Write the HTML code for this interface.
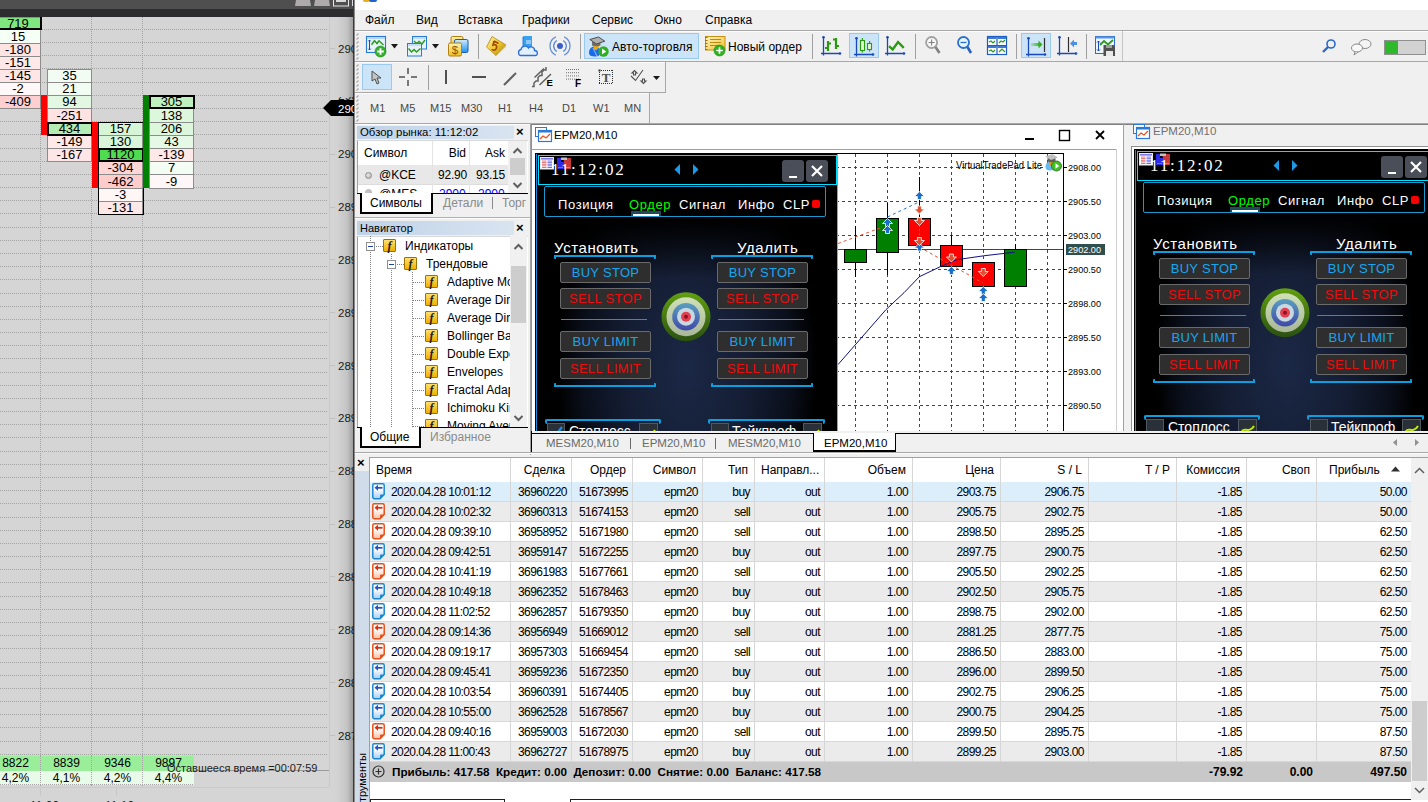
<!DOCTYPE html><html><head><meta charset="utf-8"><style>
html,body{margin:0;padding:0;}
body{width:1428px;height:802px;overflow:hidden;position:relative;background:#d5d5d5;font-family:"Liberation Sans",sans-serif;font-size:11px;color:#000;}
div{box-sizing:border-box;}
.t{position:absolute;white-space:nowrap;}
</style></head><body>
<div style="position:absolute;left:0px;top:0px;width:354px;height:10px;background:#4f4f4f"></div>
<div style="position:absolute;left:0px;top:9px;width:354px;height:8px;background:#2d2d2f"></div>
<svg style="position:absolute;left:290px;top:0" width="64" height="8"><polygon points="6,0 20,0 21,6 5,6" fill="#aeaaab"/><polygon points="25,0 39,0 40,6 24,6" fill="#aeaaab"/><rect x="43.5" y="-1" width="15" height="7" fill="none" stroke="#e8e8e8" stroke-width="1"/><rect x="46" y="-1" width="10" height="3" fill="#d8d8d8"/><line x1="62.5" y1="0" x2="62.5" y2="6" stroke="#ddd"/></svg>
<div style="position:absolute;left:0px;top:29px;width:327px;height:1px;background:repeating-linear-gradient(90deg,#a4a4a4 0 1px,transparent 1px 2px)"></div>
<div style="position:absolute;left:0px;top:42px;width:327px;height:1px;background:repeating-linear-gradient(90deg,#a4a4a4 0 1px,transparent 1px 2px)"></div>
<div style="position:absolute;left:0px;top:55px;width:327px;height:1px;background:repeating-linear-gradient(90deg,#a4a4a4 0 1px,transparent 1px 2px)"></div>
<div style="position:absolute;left:0px;top:68px;width:327px;height:1px;background:repeating-linear-gradient(90deg,#a4a4a4 0 1px,transparent 1px 2px)"></div>
<div style="position:absolute;left:0px;top:82px;width:327px;height:1px;background:repeating-linear-gradient(90deg,#a4a4a4 0 1px,transparent 1px 2px)"></div>
<div style="position:absolute;left:0px;top:95px;width:327px;height:1px;background:repeating-linear-gradient(90deg,#a4a4a4 0 1px,transparent 1px 2px)"></div>
<div style="position:absolute;left:0px;top:108px;width:327px;height:1px;background:repeating-linear-gradient(90deg,#a4a4a4 0 1px,transparent 1px 2px)"></div>
<div style="position:absolute;left:0px;top:121px;width:327px;height:1px;background:repeating-linear-gradient(90deg,#a4a4a4 0 1px,transparent 1px 2px)"></div>
<div style="position:absolute;left:0px;top:134px;width:327px;height:1px;background:repeating-linear-gradient(90deg,#a4a4a4 0 1px,transparent 1px 2px)"></div>
<div style="position:absolute;left:0px;top:148px;width:327px;height:1px;background:repeating-linear-gradient(90deg,#a4a4a4 0 1px,transparent 1px 2px)"></div>
<div style="position:absolute;left:0px;top:161px;width:327px;height:1px;background:repeating-linear-gradient(90deg,#a4a4a4 0 1px,transparent 1px 2px)"></div>
<div style="position:absolute;left:0px;top:174px;width:327px;height:1px;background:repeating-linear-gradient(90deg,#a4a4a4 0 1px,transparent 1px 2px)"></div>
<div style="position:absolute;left:0px;top:187px;width:327px;height:1px;background:repeating-linear-gradient(90deg,#a4a4a4 0 1px,transparent 1px 2px)"></div>
<div style="position:absolute;left:0px;top:200px;width:327px;height:1px;background:repeating-linear-gradient(90deg,#a4a4a4 0 1px,transparent 1px 2px)"></div>
<div style="position:absolute;left:0px;top:213px;width:327px;height:1px;background:repeating-linear-gradient(90deg,#a4a4a4 0 1px,transparent 1px 2px)"></div>
<div style="position:absolute;left:0px;top:227px;width:327px;height:1px;background:repeating-linear-gradient(90deg,#a4a4a4 0 1px,transparent 1px 2px)"></div>
<div style="position:absolute;left:0px;top:240px;width:327px;height:1px;background:repeating-linear-gradient(90deg,#a4a4a4 0 1px,transparent 1px 2px)"></div>
<div style="position:absolute;left:0px;top:253px;width:327px;height:1px;background:repeating-linear-gradient(90deg,#a4a4a4 0 1px,transparent 1px 2px)"></div>
<div style="position:absolute;left:0px;top:266px;width:327px;height:1px;background:repeating-linear-gradient(90deg,#a4a4a4 0 1px,transparent 1px 2px)"></div>
<div style="position:absolute;left:0px;top:279px;width:327px;height:1px;background:repeating-linear-gradient(90deg,#a4a4a4 0 1px,transparent 1px 2px)"></div>
<div style="position:absolute;left:0px;top:293px;width:327px;height:1px;background:repeating-linear-gradient(90deg,#a4a4a4 0 1px,transparent 1px 2px)"></div>
<div style="position:absolute;left:0px;top:306px;width:327px;height:1px;background:repeating-linear-gradient(90deg,#a4a4a4 0 1px,transparent 1px 2px)"></div>
<div style="position:absolute;left:0px;top:319px;width:327px;height:1px;background:repeating-linear-gradient(90deg,#a4a4a4 0 1px,transparent 1px 2px)"></div>
<div style="position:absolute;left:0px;top:332px;width:327px;height:1px;background:repeating-linear-gradient(90deg,#a4a4a4 0 1px,transparent 1px 2px)"></div>
<div style="position:absolute;left:0px;top:345px;width:327px;height:1px;background:repeating-linear-gradient(90deg,#a4a4a4 0 1px,transparent 1px 2px)"></div>
<div style="position:absolute;left:0px;top:358px;width:327px;height:1px;background:repeating-linear-gradient(90deg,#a4a4a4 0 1px,transparent 1px 2px)"></div>
<div style="position:absolute;left:0px;top:372px;width:327px;height:1px;background:repeating-linear-gradient(90deg,#a4a4a4 0 1px,transparent 1px 2px)"></div>
<div style="position:absolute;left:0px;top:385px;width:327px;height:1px;background:repeating-linear-gradient(90deg,#a4a4a4 0 1px,transparent 1px 2px)"></div>
<div style="position:absolute;left:0px;top:398px;width:327px;height:1px;background:repeating-linear-gradient(90deg,#a4a4a4 0 1px,transparent 1px 2px)"></div>
<div style="position:absolute;left:0px;top:411px;width:327px;height:1px;background:repeating-linear-gradient(90deg,#a4a4a4 0 1px,transparent 1px 2px)"></div>
<div style="position:absolute;left:0px;top:424px;width:327px;height:1px;background:repeating-linear-gradient(90deg,#a4a4a4 0 1px,transparent 1px 2px)"></div>
<div style="position:absolute;left:0px;top:437px;width:327px;height:1px;background:repeating-linear-gradient(90deg,#a4a4a4 0 1px,transparent 1px 2px)"></div>
<div style="position:absolute;left:0px;top:451px;width:327px;height:1px;background:repeating-linear-gradient(90deg,#a4a4a4 0 1px,transparent 1px 2px)"></div>
<div style="position:absolute;left:0px;top:464px;width:327px;height:1px;background:repeating-linear-gradient(90deg,#a4a4a4 0 1px,transparent 1px 2px)"></div>
<div style="position:absolute;left:0px;top:477px;width:327px;height:1px;background:repeating-linear-gradient(90deg,#a4a4a4 0 1px,transparent 1px 2px)"></div>
<div style="position:absolute;left:0px;top:490px;width:327px;height:1px;background:repeating-linear-gradient(90deg,#a4a4a4 0 1px,transparent 1px 2px)"></div>
<div style="position:absolute;left:0px;top:503px;width:327px;height:1px;background:repeating-linear-gradient(90deg,#a4a4a4 0 1px,transparent 1px 2px)"></div>
<div style="position:absolute;left:0px;top:517px;width:327px;height:1px;background:repeating-linear-gradient(90deg,#a4a4a4 0 1px,transparent 1px 2px)"></div>
<div style="position:absolute;left:0px;top:530px;width:327px;height:1px;background:repeating-linear-gradient(90deg,#a4a4a4 0 1px,transparent 1px 2px)"></div>
<div style="position:absolute;left:0px;top:543px;width:327px;height:1px;background:repeating-linear-gradient(90deg,#a4a4a4 0 1px,transparent 1px 2px)"></div>
<div style="position:absolute;left:0px;top:556px;width:327px;height:1px;background:repeating-linear-gradient(90deg,#a4a4a4 0 1px,transparent 1px 2px)"></div>
<div style="position:absolute;left:0px;top:569px;width:327px;height:1px;background:repeating-linear-gradient(90deg,#a4a4a4 0 1px,transparent 1px 2px)"></div>
<div style="position:absolute;left:0px;top:582px;width:327px;height:1px;background:repeating-linear-gradient(90deg,#a4a4a4 0 1px,transparent 1px 2px)"></div>
<div style="position:absolute;left:0px;top:596px;width:327px;height:1px;background:repeating-linear-gradient(90deg,#a4a4a4 0 1px,transparent 1px 2px)"></div>
<div style="position:absolute;left:0px;top:609px;width:327px;height:1px;background:repeating-linear-gradient(90deg,#a4a4a4 0 1px,transparent 1px 2px)"></div>
<div style="position:absolute;left:0px;top:622px;width:327px;height:1px;background:repeating-linear-gradient(90deg,#a4a4a4 0 1px,transparent 1px 2px)"></div>
<div style="position:absolute;left:0px;top:635px;width:327px;height:1px;background:repeating-linear-gradient(90deg,#a4a4a4 0 1px,transparent 1px 2px)"></div>
<div style="position:absolute;left:0px;top:648px;width:327px;height:1px;background:repeating-linear-gradient(90deg,#a4a4a4 0 1px,transparent 1px 2px)"></div>
<div style="position:absolute;left:0px;top:662px;width:327px;height:1px;background:repeating-linear-gradient(90deg,#a4a4a4 0 1px,transparent 1px 2px)"></div>
<div style="position:absolute;left:0px;top:675px;width:327px;height:1px;background:repeating-linear-gradient(90deg,#a4a4a4 0 1px,transparent 1px 2px)"></div>
<div style="position:absolute;left:0px;top:688px;width:327px;height:1px;background:repeating-linear-gradient(90deg,#a4a4a4 0 1px,transparent 1px 2px)"></div>
<div style="position:absolute;left:0px;top:701px;width:327px;height:1px;background:repeating-linear-gradient(90deg,#a4a4a4 0 1px,transparent 1px 2px)"></div>
<div style="position:absolute;left:0px;top:714px;width:327px;height:1px;background:repeating-linear-gradient(90deg,#a4a4a4 0 1px,transparent 1px 2px)"></div>
<div style="position:absolute;left:0px;top:727px;width:327px;height:1px;background:repeating-linear-gradient(90deg,#a4a4a4 0 1px,transparent 1px 2px)"></div>
<div style="position:absolute;left:0px;top:741px;width:327px;height:1px;background:repeating-linear-gradient(90deg,#a4a4a4 0 1px,transparent 1px 2px)"></div>
<div style="position:absolute;left:0px;top:754px;width:327px;height:1px;background:repeating-linear-gradient(90deg,#a4a4a4 0 1px,transparent 1px 2px)"></div>
<div style="position:absolute;left:40px;top:17px;width:1px;height:770px;background:repeating-linear-gradient(180deg,#a4a4a4 0 1px,transparent 1px 2px)"></div>
<div style="position:absolute;left:91px;top:17px;width:1px;height:770px;background:repeating-linear-gradient(180deg,#a4a4a4 0 1px,transparent 1px 2px)"></div>
<div style="position:absolute;left:142px;top:17px;width:1px;height:770px;background:repeating-linear-gradient(180deg,#a4a4a4 0 1px,transparent 1px 2px)"></div>
<div style="position:absolute;left:329px;top:17px;width:25px;height:785px;background:linear-gradient(90deg,#d5d5d5 0,#d3d3d3 8px,#c4c4c4 18px,#9e9e9e 24px)"></div>
<div style="position:absolute;left:329px;top:17px;width:1px;height:770px;background:#c8c8c8"></div>
<div style="position:absolute;left:353px;top:0px;width:1px;height:802px;background:#3a3a3a"></div>
<div style="position:absolute;left:0px;top:787px;width:329px;height:15px;background:#d5d5d5"></div>
<div style="position:absolute;left:0px;top:787px;width:329px;height:1px;background:#cacaca"></div>
<div style="position:absolute;left:338px;top:42px;white-space:nowrap;font-size:11.5px;color:#1a1a1a;line-height:14px">290</div>
<div style="position:absolute;left:330px;top:48px;width:5px;height:1px;background:#c0c0c0"></div>
<div style="position:absolute;left:338px;top:147px;white-space:nowrap;font-size:11.5px;color:#1a1a1a;line-height:14px">290</div>
<div style="position:absolute;left:330px;top:154px;width:5px;height:1px;background:#c0c0c0"></div>
<div style="position:absolute;left:338px;top:200px;white-space:nowrap;font-size:11.5px;color:#1a1a1a;line-height:14px">289</div>
<div style="position:absolute;left:330px;top:207px;width:5px;height:1px;background:#c0c0c0"></div>
<div style="position:absolute;left:338px;top:253px;white-space:nowrap;font-size:11.5px;color:#1a1a1a;line-height:14px">289</div>
<div style="position:absolute;left:330px;top:259px;width:5px;height:1px;background:#c0c0c0"></div>
<div style="position:absolute;left:338px;top:306px;white-space:nowrap;font-size:11.5px;color:#1a1a1a;line-height:14px">289</div>
<div style="position:absolute;left:330px;top:312px;width:5px;height:1px;background:#c0c0c0"></div>
<div style="position:absolute;left:338px;top:359px;white-space:nowrap;font-size:11.5px;color:#1a1a1a;line-height:14px">289</div>
<div style="position:absolute;left:330px;top:365px;width:5px;height:1px;background:#c0c0c0"></div>
<div style="position:absolute;left:338px;top:411px;white-space:nowrap;font-size:11.5px;color:#1a1a1a;line-height:14px">289</div>
<div style="position:absolute;left:330px;top:418px;width:5px;height:1px;background:#c0c0c0"></div>
<div style="position:absolute;left:338px;top:464px;white-space:nowrap;font-size:11.5px;color:#1a1a1a;line-height:14px">288</div>
<div style="position:absolute;left:330px;top:471px;width:5px;height:1px;background:#c0c0c0"></div>
<div style="position:absolute;left:338px;top:517px;white-space:nowrap;font-size:11.5px;color:#1a1a1a;line-height:14px">288</div>
<div style="position:absolute;left:330px;top:524px;width:5px;height:1px;background:#c0c0c0"></div>
<div style="position:absolute;left:338px;top:570px;white-space:nowrap;font-size:11.5px;color:#1a1a1a;line-height:14px">288</div>
<div style="position:absolute;left:330px;top:576px;width:5px;height:1px;background:#c0c0c0"></div>
<div style="position:absolute;left:338px;top:623px;white-space:nowrap;font-size:11.5px;color:#1a1a1a;line-height:14px">288</div>
<div style="position:absolute;left:330px;top:629px;width:5px;height:1px;background:#c0c0c0"></div>
<div style="position:absolute;left:338px;top:676px;white-space:nowrap;font-size:11.5px;color:#1a1a1a;line-height:14px">288</div>
<div style="position:absolute;left:330px;top:682px;width:5px;height:1px;background:#c0c0c0"></div>
<div style="position:absolute;left:338px;top:729px;white-space:nowrap;font-size:11.5px;color:#1a1a1a;line-height:14px">287</div>
<div style="position:absolute;left:330px;top:735px;width:5px;height:1px;background:#c0c0c0"></div>
<svg style="position:absolute;left:323px;top:100px" width="31" height="16"><polygon points="0,8 8,0 31,0 31,16 8,16" fill="#000"/></svg>
<div style="position:absolute;left:338px;top:102px;white-space:nowrap;font-size:11.5px;color:#fff;line-height:14px">290</div>
<div style="position:absolute;left:338px;top:97px;width:16px;height:4px;overflow:hidden"><div class="t" style="left:0;top:-8px;font-size:12px;line-height:14px;color:#1a1a1a">290</div></div>
<div style="position:absolute;left:-5px;top:17px;width:46px;height:13px;background:#80e680;border:1px solid #8c8c8c;"></div>
<div style="position:absolute;left:-5px;top:17px;white-space:nowrap;width:46px;text-align:center;font-size:13px;line-height:13px;color:#000">719</div>
<div style="position:absolute;left:-5px;top:29px;width:46px;height:15px;background:#f5fff5;border:1px solid #8c8c8c;"></div>
<div style="position:absolute;left:-5px;top:29px;white-space:nowrap;width:46px;text-align:center;font-size:13px;line-height:15px;color:#000">15</div>
<div style="position:absolute;left:-5px;top:43px;width:46px;height:14px;background:#ffe4e4;border:1px solid #8c8c8c;"></div>
<div style="position:absolute;left:-5px;top:43px;white-space:nowrap;width:46px;text-align:center;font-size:13px;line-height:14px;color:#000">-180</div>
<div style="position:absolute;left:-5px;top:56px;width:46px;height:14px;background:#ffe8e8;border:1px solid #8c8c8c;"></div>
<div style="position:absolute;left:-5px;top:56px;white-space:nowrap;width:46px;text-align:center;font-size:13px;line-height:14px;color:#000">-151</div>
<div style="position:absolute;left:-5px;top:69px;width:46px;height:14px;background:#ffe6e6;border:1px solid #8c8c8c;"></div>
<div style="position:absolute;left:-5px;top:69px;white-space:nowrap;width:46px;text-align:center;font-size:13px;line-height:14px;color:#000">-145</div>
<div style="position:absolute;left:-5px;top:82px;width:46px;height:14px;background:#fff8f8;border:1px solid #8c8c8c;"></div>
<div style="position:absolute;left:-5px;top:82px;white-space:nowrap;width:46px;text-align:center;font-size:13px;line-height:14px;color:#000">-2</div>
<div style="position:absolute;left:-5px;top:95px;width:46px;height:14px;background:#ffcfcf;border:1px solid #8c8c8c;"></div>
<div style="position:absolute;left:-5px;top:95px;white-space:nowrap;width:46px;text-align:center;font-size:13px;line-height:14px;color:#000">-409</div>
<div style="position:absolute;left:-5px;top:17px;width:47px;height:13px;border:2px solid #000;border-top:none"></div>
<div style="position:absolute;left:47px;top:69px;width:45px;height:14px;background:#f3fcf3;border:1px solid #8c8c8c;"></div>
<div style="position:absolute;left:47px;top:69px;white-space:nowrap;width:45px;text-align:center;font-size:13px;line-height:14px;color:#000">35</div>
<div style="position:absolute;left:47px;top:82px;width:45px;height:14px;background:#f3fcf3;border:1px solid #8c8c8c;"></div>
<div style="position:absolute;left:47px;top:82px;white-space:nowrap;width:45px;text-align:center;font-size:13px;line-height:14px;color:#000">21</div>
<div style="position:absolute;left:47px;top:95px;width:45px;height:14px;background:#e2f8e2;border:1px solid #8c8c8c;"></div>
<div style="position:absolute;left:47px;top:95px;white-space:nowrap;width:45px;text-align:center;font-size:13px;line-height:14px;color:#000">94</div>
<div style="position:absolute;left:47px;top:108px;width:45px;height:15px;background:#ffe2e2;border:1px solid #8c8c8c;"></div>
<div style="position:absolute;left:47px;top:108px;white-space:nowrap;width:45px;text-align:center;font-size:13px;line-height:15px;color:#000">-251</div>
<div style="position:absolute;left:47px;top:122px;width:45px;height:14px;background:#b4ecb4;border:1px solid #8c8c8c;"></div>
<div style="position:absolute;left:47px;top:122px;white-space:nowrap;width:45px;text-align:center;font-size:13px;line-height:14px;color:#000">434</div>
<div style="position:absolute;left:47px;top:135px;width:45px;height:14px;background:#ffe8e8;border:1px solid #8c8c8c;"></div>
<div style="position:absolute;left:47px;top:135px;white-space:nowrap;width:45px;text-align:center;font-size:13px;line-height:14px;color:#000">-149</div>
<div style="position:absolute;left:47px;top:148px;width:45px;height:14px;background:#ffe6e6;border:1px solid #8c8c8c;"></div>
<div style="position:absolute;left:47px;top:148px;white-space:nowrap;width:45px;text-align:center;font-size:13px;line-height:14px;color:#000">-167</div>
<div style="position:absolute;left:47px;top:122px;width:46px;height:14px;border:2px solid #000"></div>
<div style="position:absolute;left:98px;top:122px;width:45px;height:14px;background:#d6f5d6;border:1px solid #8c8c8c;"></div>
<div style="position:absolute;left:98px;top:122px;white-space:nowrap;width:45px;text-align:center;font-size:13px;line-height:14px;color:#000">157</div>
<div style="position:absolute;left:98px;top:135px;width:45px;height:14px;background:#daf6da;border:1px solid #8c8c8c;"></div>
<div style="position:absolute;left:98px;top:135px;white-space:nowrap;width:45px;text-align:center;font-size:13px;line-height:14px;color:#000">130</div>
<div style="position:absolute;left:98px;top:148px;width:45px;height:14px;background:#50dc50;border:1px solid #8c8c8c;"></div>
<div style="position:absolute;left:98px;top:148px;white-space:nowrap;width:45px;text-align:center;font-size:13px;line-height:14px;color:#000">1120</div>
<div style="position:absolute;left:98px;top:161px;width:45px;height:14px;background:#ffd6d6;border:1px solid #8c8c8c;"></div>
<div style="position:absolute;left:98px;top:161px;white-space:nowrap;width:45px;text-align:center;font-size:13px;line-height:14px;color:#000">-304</div>
<div style="position:absolute;left:98px;top:174px;width:45px;height:15px;background:#ffcccc;border:1px solid #8c8c8c;"></div>
<div style="position:absolute;left:98px;top:174px;white-space:nowrap;width:45px;text-align:center;font-size:13px;line-height:15px;color:#000">-462</div>
<div style="position:absolute;left:98px;top:188px;width:45px;height:14px;background:#fff6f6;border:1px solid #8c8c8c;"></div>
<div style="position:absolute;left:98px;top:188px;white-space:nowrap;width:45px;text-align:center;font-size:13px;line-height:14px;color:#000">-3</div>
<div style="position:absolute;left:98px;top:201px;width:45px;height:14px;background:#ffe8e8;border:1px solid #8c8c8c;"></div>
<div style="position:absolute;left:98px;top:201px;white-space:nowrap;width:45px;text-align:center;font-size:13px;line-height:14px;color:#000">-131</div>
<div style="position:absolute;left:98px;top:148px;width:46px;height:14px;border:2px solid #000"></div>
<div style="position:absolute;left:98px;top:122px;width:46px;height:93px;border:1px solid #000"></div>
<div style="position:absolute;left:149px;top:95px;width:45px;height:14px;background:#bff0bf;border:1px solid #8c8c8c;"></div>
<div style="position:absolute;left:149px;top:95px;white-space:nowrap;width:45px;text-align:center;font-size:13px;line-height:14px;color:#000">305</div>
<div style="position:absolute;left:149px;top:108px;width:45px;height:15px;background:#dcf7dc;border:1px solid #8c8c8c;"></div>
<div style="position:absolute;left:149px;top:108px;white-space:nowrap;width:45px;text-align:center;font-size:13px;line-height:15px;color:#000">138</div>
<div style="position:absolute;left:149px;top:122px;width:45px;height:14px;background:#dcf7dc;border:1px solid #8c8c8c;"></div>
<div style="position:absolute;left:149px;top:122px;white-space:nowrap;width:45px;text-align:center;font-size:13px;line-height:14px;color:#000">206</div>
<div style="position:absolute;left:149px;top:135px;width:45px;height:14px;background:#e6f9e6;border:1px solid #8c8c8c;"></div>
<div style="position:absolute;left:149px;top:135px;white-space:nowrap;width:45px;text-align:center;font-size:13px;line-height:14px;color:#000">43</div>
<div style="position:absolute;left:149px;top:148px;width:45px;height:14px;background:#ffe8e8;border:1px solid #8c8c8c;"></div>
<div style="position:absolute;left:149px;top:148px;white-space:nowrap;width:45px;text-align:center;font-size:13px;line-height:14px;color:#000">-139</div>
<div style="position:absolute;left:149px;top:161px;width:45px;height:14px;background:#f3fdf3;border:1px solid #8c8c8c;"></div>
<div style="position:absolute;left:149px;top:161px;white-space:nowrap;width:45px;text-align:center;font-size:13px;line-height:14px;color:#000">7</div>
<div style="position:absolute;left:149px;top:174px;width:45px;height:15px;background:#fff7f7;border:1px solid #8c8c8c;"></div>
<div style="position:absolute;left:149px;top:174px;white-space:nowrap;width:45px;text-align:center;font-size:13px;line-height:15px;color:#000">-9</div>
<div style="position:absolute;left:149px;top:95px;width:46px;height:14px;border:2px solid #000"></div>
<div style="position:absolute;left:41px;top:95px;width:6px;height:40px;background:#ff0000"></div>
<div style="position:absolute;left:92px;top:122px;width:6px;height:66px;background:#ff0000"></div>
<div style="position:absolute;left:143px;top:95px;width:6px;height:93px;background:#008000"></div>
<div style="position:absolute;left:0px;top:756px;width:194px;height:15px;background:#9aee9a"></div>
<div style="position:absolute;left:0px;top:771px;width:194px;height:14px;background:#e8fbe8"></div>
<div style="position:absolute;left:40px;top:756px;width:1px;height:29px;background:repeating-linear-gradient(180deg,#a4a4a4 0 1px,transparent 1px 2px)"></div>
<div style="position:absolute;left:91px;top:756px;width:1px;height:29px;background:repeating-linear-gradient(180deg,#a4a4a4 0 1px,transparent 1px 2px)"></div>
<div style="position:absolute;left:142px;top:756px;width:1px;height:29px;background:repeating-linear-gradient(180deg,#a4a4a4 0 1px,transparent 1px 2px)"></div>
<div style="position:absolute;left:0px;top:784px;width:194px;height:1px;background:repeating-linear-gradient(90deg,#a4a4a4 0 1px,transparent 1px 2px)"></div>
<div style="position:absolute;left:-10px;top:756px;white-space:nowrap;width:51px;text-align:center;font-size:12px;line-height:15px">8822</div>
<div style="position:absolute;left:-10px;top:771px;white-space:nowrap;width:51px;text-align:center;font-size:12px;line-height:14px">4,2%</div>
<div style="position:absolute;left:41px;top:756px;white-space:nowrap;width:51px;text-align:center;font-size:12px;line-height:15px">8839</div>
<div style="position:absolute;left:41px;top:771px;white-space:nowrap;width:51px;text-align:center;font-size:12px;line-height:14px">4,1%</div>
<div style="position:absolute;left:92px;top:756px;white-space:nowrap;width:51px;text-align:center;font-size:12px;line-height:15px">9346</div>
<div style="position:absolute;left:92px;top:771px;white-space:nowrap;width:51px;text-align:center;font-size:12px;line-height:14px">4,2%</div>
<div style="position:absolute;left:143px;top:756px;white-space:nowrap;width:51px;text-align:center;font-size:12px;line-height:15px">9897</div>
<div style="position:absolute;left:143px;top:771px;white-space:nowrap;width:51px;text-align:center;font-size:12px;line-height:14px">4,4%</div>
<div style="position:absolute;left:194px;top:770px;width:135px;height:1px;background:#9a9a9a"></div>
<div style="position:absolute;left:167px;top:761px;white-space:nowrap;font-size:11px;line-height:14px;color:#1e1e1e">Оставшееся время =00:07:59</div>
<div style="position:absolute;left:30px;top:799px;white-space:nowrap;font-size:12px;line-height:14px;color:#222">11:00</div>
<div style="position:absolute;left:105px;top:799px;white-space:nowrap;font-size:12px;line-height:14px;color:#222">11:10</div>
<div style="position:absolute;left:40px;top:788px;width:1px;height:8px;background:#c8c8c8"></div>
<div style="position:absolute;left:116px;top:788px;width:1px;height:8px;background:#c8c8c8"></div>
<div style="position:absolute;left:354px;top:0px;width:1074px;height:802px;background:#f0f0f0"></div>
<div style="position:absolute;left:354px;top:0px;width:1px;height:802px;background:#8a8a8a"></div>
<div style="position:absolute;left:355px;top:0px;width:1073px;height:10px;background:#ffffff"></div>
<div style="position:absolute;left:363px;top:0px;width:7px;height:2px;background:#e8b020;border-radius:0 0 3px 3px"></div>
<div style="position:absolute;left:369px;top:0px;width:8px;height:2px;background:#2060d0;border-radius:0 0 3px 3px"></div>
<div style="position:absolute;left:365px;top:13px;white-space:nowrap;font-size:12px;line-height:14px;color:#000">Файл</div>
<div style="position:absolute;left:416px;top:13px;white-space:nowrap;font-size:12px;line-height:14px;color:#000">Вид</div>
<div style="position:absolute;left:458px;top:13px;white-space:nowrap;font-size:12px;line-height:14px;color:#000">Вставка</div>
<div style="position:absolute;left:522px;top:13px;white-space:nowrap;font-size:12px;line-height:14px;color:#000">Графики</div>
<div style="position:absolute;left:592px;top:13px;white-space:nowrap;font-size:12px;line-height:14px;color:#000">Сервис</div>
<div style="position:absolute;left:654px;top:13px;white-space:nowrap;font-size:12px;line-height:14px;color:#000">Окно</div>
<div style="position:absolute;left:705px;top:13px;white-space:nowrap;font-size:12px;line-height:14px;color:#000">Справка</div>
<div style="position:absolute;left:355px;top:30px;width:1073px;height:1px;background:#a8a8a8"></div>
<div style="position:absolute;left:355px;top:31px;width:1073px;height:1px;background:#fcfcfc"></div>
<div style="position:absolute;left:355px;top:61px;width:1073px;height:1px;background:#a8a8a8"></div>
<div style="position:absolute;left:355px;top:62px;width:1073px;height:1px;background:#fcfcfc"></div>
<div style="position:absolute;left:355px;top:92px;width:1073px;height:1px;background:#a8a8a8"></div>
<div style="position:absolute;left:355px;top:93px;width:1073px;height:1px;background:#fcfcfc"></div>
<div style="position:absolute;left:355px;top:123px;width:1073px;height:1px;background:#a8a8a8"></div>
<div style="position:absolute;left:355px;top:124px;width:1073px;height:1px;background:#fcfcfc"></div>
<div style="position:absolute;left:1122px;top:31px;width:1px;height:30px;background:#c4c4c4"></div>
<div style="position:absolute;left:665px;top:62px;width:1px;height:30px;background:#a8a8a8"></div>
<div style="position:absolute;left:649px;top:93px;width:1px;height:30px;background:#a8a8a8"></div>
<div style="position:absolute;left:666px;top:62px;width:762px;height:31px;background:#f0f0f0"></div>
<div style="position:absolute;left:650px;top:93px;width:778px;height:30px;background:#f0f0f0"></div>
<div style="position:absolute;left:666px;top:92px;width:762px;height:1px;background:#f0f0f0"></div>
<svg style="position:absolute;left:0;top:0" width="400" height="130"><path d="M356.5,35.5 L358.5,33.5" stroke="#a8a8a8" stroke-width="1.2"/><path d="M356.5,39.5 L358.5,37.5" stroke="#a8a8a8" stroke-width="1.2"/><path d="M356.5,43.5 L358.5,41.5" stroke="#a8a8a8" stroke-width="1.2"/><path d="M356.5,47.5 L358.5,45.5" stroke="#a8a8a8" stroke-width="1.2"/><path d="M356.5,51.5 L358.5,49.5" stroke="#a8a8a8" stroke-width="1.2"/><path d="M356.5,55.5 L358.5,53.5" stroke="#a8a8a8" stroke-width="1.2"/><path d="M356.5,59.5 L358.5,57.5" stroke="#a8a8a8" stroke-width="1.2"/><path d="M356.5,66.5 L358.5,64.5" stroke="#a8a8a8" stroke-width="1.2"/><path d="M356.5,70.5 L358.5,68.5" stroke="#a8a8a8" stroke-width="1.2"/><path d="M356.5,74.5 L358.5,72.5" stroke="#a8a8a8" stroke-width="1.2"/><path d="M356.5,78.5 L358.5,76.5" stroke="#a8a8a8" stroke-width="1.2"/><path d="M356.5,82.5 L358.5,80.5" stroke="#a8a8a8" stroke-width="1.2"/><path d="M356.5,86.5 L358.5,84.5" stroke="#a8a8a8" stroke-width="1.2"/><path d="M356.5,90.5 L358.5,88.5" stroke="#a8a8a8" stroke-width="1.2"/><path d="M356.5,97.5 L358.5,95.5" stroke="#a8a8a8" stroke-width="1.2"/><path d="M356.5,101.5 L358.5,99.5" stroke="#a8a8a8" stroke-width="1.2"/><path d="M356.5,105.5 L358.5,103.5" stroke="#a8a8a8" stroke-width="1.2"/><path d="M356.5,109.5 L358.5,107.5" stroke="#a8a8a8" stroke-width="1.2"/><path d="M356.5,113.5 L358.5,111.5" stroke="#a8a8a8" stroke-width="1.2"/><path d="M356.5,117.5 L358.5,115.5" stroke="#a8a8a8" stroke-width="1.2"/><path d="M356.5,121.5 L358.5,119.5" stroke="#a8a8a8" stroke-width="1.2"/></svg>
<div style="position:absolute;left:478px;top:34px;width:1px;height:25px;background:#a0a0a0"></div>
<div style="position:absolute;left:580px;top:34px;width:1px;height:25px;background:#a0a0a0"></div>
<div style="position:absolute;left:812px;top:34px;width:1px;height:25px;background:#a0a0a0"></div>
<div style="position:absolute;left:915px;top:34px;width:1px;height:25px;background:#a0a0a0"></div>
<div style="position:absolute;left:1016px;top:34px;width:1px;height:25px;background:#a0a0a0"></div>
<div style="position:absolute;left:1086px;top:34px;width:1px;height:25px;background:#a0a0a0"></div>
<div style="position:absolute;left:428px;top:65px;width:1px;height:25px;background:#a0a0a0"></div>
<div style="position:absolute;left:584px;top:33px;width:115px;height:26px;background:#cce4f7;border:1px solid #99c9ef"></div>
<div style="position:absolute;left:849px;top:33px;width:30px;height:25px;background:#cce4f7;border:1px solid #99c9ef"></div>
<div style="position:absolute;left:1021px;top:33px;width:30px;height:25px;background:#cce4f7;border:1px solid #99c9ef"></div>
<div style="position:absolute;left:362px;top:64px;width:30px;height:26px;background:#cce4f7;border:1px solid #99c9ef"></div>
<div style="position:absolute;left:612px;top:40px;white-space:nowrap;font-size:12px;line-height:15px;color:#000;letter-spacing:0.1px">Авто-торговля</div>
<div style="position:absolute;left:728px;top:40px;white-space:nowrap;font-size:12px;line-height:15px;color:#000">Новый ордер</div>
<div style="position:absolute;left:370px;top:101px;white-space:nowrap;font-size:11px;line-height:14px;color:#484848">M1</div>
<div style="position:absolute;left:400px;top:101px;white-space:nowrap;font-size:11px;line-height:14px;color:#484848">M5</div>
<div style="position:absolute;left:430px;top:101px;white-space:nowrap;font-size:11px;line-height:14px;color:#484848">M15</div>
<div style="position:absolute;left:461px;top:101px;white-space:nowrap;font-size:11px;line-height:14px;color:#484848">M30</div>
<div style="position:absolute;left:498px;top:101px;white-space:nowrap;font-size:11px;line-height:14px;color:#484848">H1</div>
<div style="position:absolute;left:529px;top:101px;white-space:nowrap;font-size:11px;line-height:14px;color:#484848">H4</div>
<div style="position:absolute;left:562px;top:101px;white-space:nowrap;font-size:11px;line-height:14px;color:#484848">D1</div>
<div style="position:absolute;left:593px;top:101px;white-space:nowrap;font-size:11px;line-height:14px;color:#484848">W1</div>
<div style="position:absolute;left:624px;top:101px;white-space:nowrap;font-size:11px;line-height:14px;color:#484848">MN</div>
<svg style="position:absolute;left:0;top:0" width="1428" height="802"><g transform="translate(366,36)"><rect x="0.5" y="0.5" width="19" height="16" fill="#e8f2fc" stroke="#2b7ad8" stroke-width="1.1"/><path d="M1,2 H19" stroke="#9cc4f0" stroke-width="1.2"/><path d="M3.5,4 V14 M2.3,5.3 L3.5,4 L4.7,5.3 M2.3,12.7 L3.5,14 L4.7,12.7" stroke="#1a4ab8" stroke-width="1" fill="none"/><path d="M5.5,8.8 L8.5,4.7 L11,7.5 L13,4.8 L17.5,9" stroke="#2e9a20" stroke-width="1.5" fill="none"/><circle cx="14.5" cy="15.5" r="5.5" fill="#36b030"/><circle cx="14.5" cy="15.5" r="5.5" fill="none" stroke="#1e8a18" stroke-width="0.6"/><path d="M14.5,12.2 V18.8 M11.2,15.5 H17.8" stroke="#fff" stroke-width="1.9"/></g><polygon points="391,44 398,44 394.5,48.5" fill="#1a1a1a"/><polygon points="432,44 439,44 435.5,48.5" fill="#1a1a1a"/><g transform="translate(407,36)"><rect x="5.5" y="0.5" width="14" height="12.5" fill="#e8f2fc" stroke="#2b7ad8"/><path d="M6,2 H19" stroke="#9cc4f0"/><path d="M7,5 L9.5,7.5 L12,5.5 L15,8 L18,4" stroke="#2e9a20" stroke-width="1.4" fill="none"/><rect x="0.5" y="7.5" width="14" height="12.5" fill="#e8f2fc" stroke="#2b7ad8"/><path d="M1,9 H14" stroke="#9cc4f0"/><path d="M1.5,12.5 L4.5,16 L7,13.5 L9.5,16 L13.5,12.5" stroke="#2e9a20" stroke-width="1.5" fill="none"/></g><g transform="translate(448,36)"><defs><linearGradient id="gy" x1="0" y1="0" x2="0" y2="1"><stop offset="0" stop-color="#fff0b0"/><stop offset="1" stop-color="#f0c020"/></linearGradient><linearGradient id="gb" x1="0" y1="0" x2="0" y2="1"><stop offset="0" stop-color="#d0ecff"/><stop offset="1" stop-color="#2090f0"/></linearGradient></defs><rect x="3" y="0.5" width="12" height="10" rx="1.5" fill="url(#gy)" stroke="#b08010"/><rect x="6.5" y="3.5" width="13.5" height="13" rx="1.5" fill="url(#gb)" stroke="#1c5cb0"/><rect x="0.5" y="7" width="13" height="13" rx="1.5" fill="url(#gy)" stroke="#b08010"/><text x="7" y="18" font-family="Liberation Sans" font-size="11.5" text-anchor="middle" fill="#7a5a00">$</text></g><g transform="translate(486,36)"><defs><linearGradient id="bk" x1="0" y1="0" x2="1" y2="1"><stop offset="0" stop-color="#fff4b0"/><stop offset="0.5" stop-color="#f0c830"/><stop offset="1" stop-color="#a07800"/></linearGradient></defs><path d="M0.5,11 L6,0.5 L20,9 L10,19.5 Z" fill="url(#bk)" stroke="#b08a10" stroke-width="0.8"/><path d="M10,19.5 L20,9 L20,11 L10,20 Z" fill="#d8c880"/><path d="M8,5 L12.5,7.5 M8,5 L7,9 C9,8 12,9 10,13 C9,15 6,14 6,13" stroke="#a04a00" stroke-width="1.6" fill="none"/></g><g transform="translate(518,36)"><path d="M4.5,1 L6,0 H14 V11 H6 L4.5,12 Z" fill="#2a8ae8"/><rect x="6" y="0" width="8" height="11" fill="#3aa0f0"/><path d="M8,5 H13 M8,7 H13" stroke="#e0f0ff" stroke-width="1"/><path d="M3,19.5 C0,19.5 -0.5,14 3,13.5 C3.5,9.5 9,9 10.5,12 C12,10 17,11 16.5,14.5 C20,14.5 20.5,19.5 17,19.5 Z" fill="#e4effc" stroke="#2a70d8" stroke-width="1.3"/></g><g transform="translate(560,46)" fill="none" stroke="#3a70d0"><circle r="3" fill="#3a60c8" stroke="none"/><path d="M-3.15,-5.46 A6.3,6.3 0 0,0 -3.15,5.46 M3.15,-5.46 A6.3,6.3 0 0,1 3.15,5.46" stroke-width="1.3" opacity="0.8"/><path d="M-4.2,-9.06 A10,10 0 0,0 -4.2,9.06 M4.2,-9.06 A10,10 0 0,1 4.2,9.06" stroke-width="1.3" opacity="0.75"/></g><g transform="translate(584,33)"><path d="M5,20 C5,15 8,13.5 11,13.5 C14,13.5 16,15 16,20 Q16,23.5 11,23.5 Q5,23.5 5,20 Z" fill="#1a6ae8"/><path d="M9,15 L13,23" stroke="#7ab0f0" stroke-width="1.2"/><path d="M8.5,12 H16 L13,17 H10.5 Z" fill="#e8a818"/><path d="M8,9 H16.5 V12.5 Q12,14 8,12.5 Z" fill="#707070"/><path d="M5.8,6.5 L14.5,4 L20.8,8.2 L12.5,11 Z" fill="#b0b0b0" stroke="#404040" stroke-width="0.9"/><circle cx="19.5" cy="18.5" r="5.2" fill="#30b020"/><polygon points="18,15.6 18,21.4 22.3,18.5" fill="#fff"/></g><g transform="translate(705,36)"><defs><linearGradient id="gn" x1="0" y1="0" x2="1" y2="1"><stop offset="0" stop-color="#fff4c0"/><stop offset="1" stop-color="#f0c030"/></linearGradient></defs><rect x="0.5" y="0.5" width="19.5" height="13.5" fill="url(#gn)" stroke="#c89010" stroke-width="1"/><path d="M0,1.5 H2.5 M0,4.5 H2.5 M0,7.5 H2.5 M0,10.5 H2.5 M0,13.5 H2.5" stroke="#a07000" stroke-width="1.2"/><path d="M5,3.5 H16 M5,6.5 H16 M5,9.5 H14" stroke="#b88a10" stroke-width="1.2"/><circle cx="14.5" cy="14.5" r="5.5" fill="#30b020" stroke="#209010" stroke-width="0.6"/><path d="M14.5,11.2 V17.8 M11.2,14.5 H17.8" stroke="#fff" stroke-width="1.7"/></g><g transform="translate(821,36)"><path d="M2.5,0.8 V19.5 M0,17.5 H19" stroke="#1a4ab8" stroke-width="1.3" fill="none"/><circle cx="2.5" cy="1.2" r="1.3" fill="#1a4ab8"/><circle cx="19" cy="17.5" r="1.3" fill="#1a4ab8"/></g><g stroke="#2a9a10" stroke-width="2.2" fill="none"><path d="M828,41 V51 M825,48 H828 M828,43.5 H831"/><path d="M836,38 V49 M833,39.5 H836 M836,46 H839"/></g><g transform="translate(854,37)"><path d="M2.5,0.8 V19.5 M0,17.5 H19" stroke="#1a4ab8" stroke-width="1.3" fill="none"/><circle cx="2.5" cy="1.2" r="1.3" fill="#1a4ab8"/><circle cx="19" cy="17.5" r="1.3" fill="#1a4ab8"/></g><g stroke="#2a9a10" stroke-width="1.1" fill="#e0f8d0"><path d="M862.4,38 V52.5 M869.6,41 V51.5"/><rect x="860.5" y="40.5" width="4" height="10"/><rect x="867.5" y="43.5" width="4" height="6"/></g><g transform="translate(885,36)"><path d="M2.5,0.8 V19.5 M0,17.5 H19" stroke="#1a4ab8" stroke-width="1.3" fill="none"/><circle cx="2.5" cy="1.2" r="1.3" fill="#1a4ab8"/><circle cx="19" cy="17.5" r="1.3" fill="#1a4ab8"/></g><path d="M889,46.2 L892.7,49.5 L898,42 L903.8,47.8" stroke="#2a9a10" stroke-width="2.4" fill="none"/><g><circle cx="931.6" cy="42.5" r="5.5" fill="#f8f8f8" stroke="#a0a0a0" stroke-width="1.8"/><path d="M931.6,39.5 V45.5 M928.6,42.5 H934.6" stroke="#808080" stroke-width="1.1"/><path d="M935.5,47 L939.5,53" stroke="#808080" stroke-width="2.6"/></g><g><circle cx="963.5" cy="42.5" r="5.5" fill="#eaf4ff" stroke="#2a70d0" stroke-width="1.8"/><path d="M960.5,42.5 H966.5" stroke="#2a70d0" stroke-width="1.3"/><path d="M967.5,47 L971,53" stroke="#2a60c0" stroke-width="2.6"/></g><g transform="translate(987,36)"><rect x="0.5" y="0.5" width="19" height="18" fill="#ffffff" stroke="#1e5cc0" stroke-width="1.2"/><path d="M10,0.5 V18.5 M0.5,9.5 H19.5" stroke="#1e5cc0" stroke-width="1.2"/><rect x="1" y="1" width="8.5" height="2" fill="#3a7ad8"/><rect x="10.5" y="1" width="8.5" height="2" fill="#3a7ad8"/><rect x="1" y="10" width="8.5" height="2" fill="#3a7ad8"/><rect x="10.5" y="10" width="8.5" height="2" fill="#3a7ad8"/><path d="M2,6 L4,5 L6,7 L8,5 M12,7 L14,5 L16,6 L18,4 M2,15 L4,14 L6,16 L8,14 M12,16 L15,13 L18,16" stroke="#2a9a20" stroke-width="1.2" fill="none"/></g><g transform="translate(1026,37)"><path d="M2.5,0.8 V19.5 M0,17.5 H19" stroke="#1a4ab8" stroke-width="1.3" fill="none"/><circle cx="2.5" cy="1.2" r="1.3" fill="#1a4ab8"/><circle cx="19" cy="17.5" r="1.3" fill="#1a4ab8"/></g><defs><linearGradient id="ga" gradientUnits="userSpaceOnUse" x1="1030" y1="0" x2="1040" y2="0"><stop offset="0" stop-color="#50c040" stop-opacity="0.2"/><stop offset="1" stop-color="#30b020"/></linearGradient></defs><path d="M1044.5,38 V52" stroke="#303030" stroke-width="1.2"/><path d="M1031,44.5 H1039" stroke="url(#ga)" stroke-width="3"/><polygon points="1038.5,40.5 1042.5,44.5 1038.5,48.5" fill="#30b020"/><g transform="translate(1057,36)"><path d="M2.5,0.8 V19.5 M0,17.5 H19" stroke="#1a4ab8" stroke-width="1.3" fill="none"/><circle cx="2.5" cy="1.2" r="1.3" fill="#1a4ab8"/><circle cx="19" cy="17.5" r="1.3" fill="#1a4ab8"/></g><path d="M1068.5,37 V52" stroke="#303030" stroke-width="1.2"/><path d="M1073,43.5 H1077" stroke="#4a90e8" stroke-width="3"/><polygon points="1074,39.5 1070,43.5 1074,47.5" fill="#4a90e8"/><g transform="translate(1095,36)"><rect x="0.5" y="0.5" width="19" height="17" fill="#eef5fd" stroke="#2b6bd0"/><rect x="0.5" y="0.5" width="19" height="2" fill="#5a95e0"/><path d="M3.5,5 V15 M2,6.5 L3.5,5 L5,6.5 M2,13.5 L3.5,15 L5,13.5" stroke="#1a4ab8" stroke-width="1" fill="none"/><path d="M5,9 L9,5 L13,8.5 L18,4" stroke="#2e9a20" stroke-width="1.8" fill="none"/><path d="M8.5,9 H18.5 L20,10.5 V20 H8.5 Z" fill="#505050"/><rect x="11" y="15" width="7" height="5" fill="#e8e8e8"/><rect x="11" y="9" width="6" height="3" fill="#a0a0a0"/></g><g transform="translate(1322,39)"><circle cx="9" cy="5" r="4" fill="none" stroke="#2a68c8" stroke-width="1.6"/><path d="M6,8 L1,13" stroke="#2a68c8" stroke-width="2.4"/></g><g transform="translate(1351,39)"><ellipse cx="14" cy="5" rx="6" ry="4.5" fill="#f4f4f4" stroke="#8a8a8a"/><ellipse cx="6" cy="9" rx="5.5" ry="4" fill="#f8f8f8" stroke="#8a8a8a"/><path d="M4,13 L3,16 L7,13" fill="#f8f8f8" stroke="#8a8a8a"/></g><rect x="1384.5" y="40.5" width="41" height="14" fill="#d2d2d2" stroke="#909090"/><rect x="1385" y="41" width="13" height="13" fill="#2eb82e"/><g transform="translate(371,70)"><path d="M1,1 L1,11 L4,9 L6,14 L8,13 L6,8 L10,8 Z" fill="#c4c4c4" stroke="#505050" stroke-width="1"/></g><path d="M408,68 V74 M408,80 V86 M399,77 H405 M411,77 H417" stroke="#505050" stroke-width="1.5"/><path d="M446,70 V84" stroke="#505050" stroke-width="2"/><path d="M472,77 H486" stroke="#505050" stroke-width="2"/><path d="M504,85 L516,73" stroke="#606060" stroke-width="2"/><g stroke="#606060" stroke-width="1.5" fill="none"><path d="M534.5,77.5 L544,68.5"/><path d="M539.5,85 L551,74"/><path d="M532,86.5 H534 V83 L536,81 H538 V77.5 L540,75.5 H542 V72 L544,70 H546 V67"/></g><text x="546.5" y="86.3" font-family="Liberation Sans" font-size="9.5" font-weight="bold" fill="#000">E</text><g fill="#707070"><rect x="566" y="69.0" width="1" height="1"/><rect x="566" y="72.2" width="1" height="1"/><rect x="566" y="75.4" width="1" height="1"/><rect x="566" y="78.6" width="1" height="1"/><rect x="568" y="69.0" width="1" height="1"/><rect x="568" y="72.2" width="1" height="1"/><rect x="568" y="75.4" width="1" height="1"/><rect x="568" y="78.6" width="1" height="1"/><rect x="570" y="69.0" width="1" height="1"/><rect x="570" y="72.2" width="1" height="1"/><rect x="570" y="75.4" width="1" height="1"/><rect x="570" y="78.6" width="1" height="1"/><rect x="572" y="69.0" width="1" height="1"/><rect x="572" y="72.2" width="1" height="1"/><rect x="572" y="75.4" width="1" height="1"/><rect x="572" y="78.6" width="1" height="1"/><rect x="574" y="69.0" width="1" height="1"/><rect x="574" y="72.2" width="1" height="1"/><rect x="574" y="75.4" width="1" height="1"/><rect x="574" y="78.6" width="1" height="1"/><rect x="576" y="69.0" width="1" height="1"/><rect x="576" y="72.2" width="1" height="1"/><rect x="576" y="75.4" width="1" height="1"/><rect x="576" y="78.6" width="1" height="1"/><rect x="578" y="69.0" width="1" height="1"/><rect x="578" y="72.2" width="1" height="1"/><rect x="578" y="75.4" width="1" height="1"/><rect x="578" y="78.6" width="1" height="1"/></g><text x="575" y="86.5" font-family="Liberation Sans" font-size="10" font-weight="bold" fill="#000">F</text><g fill="#303030"><rect x="599" y="70" width="1" height="1"/><rect x="599" y="83" width="1" height="1"/><rect x="601" y="70" width="1" height="1"/><rect x="601" y="83" width="1" height="1"/><rect x="603" y="70" width="1" height="1"/><rect x="603" y="83" width="1" height="1"/><rect x="605" y="70" width="1" height="1"/><rect x="605" y="83" width="1" height="1"/><rect x="607" y="70" width="1" height="1"/><rect x="607" y="83" width="1" height="1"/><rect x="609" y="70" width="1" height="1"/><rect x="609" y="83" width="1" height="1"/><rect x="611" y="70" width="1" height="1"/><rect x="611" y="83" width="1" height="1"/><rect x="599" y="70" width="1" height="1"/><rect x="612" y="70" width="1" height="1"/><rect x="599" y="72" width="1" height="1"/><rect x="612" y="72" width="1" height="1"/><rect x="599" y="74" width="1" height="1"/><rect x="612" y="74" width="1" height="1"/><rect x="599" y="76" width="1" height="1"/><rect x="612" y="76" width="1" height="1"/><rect x="599" y="78" width="1" height="1"/><rect x="612" y="78" width="1" height="1"/><rect x="599" y="80" width="1" height="1"/><rect x="612" y="80" width="1" height="1"/><rect x="599" y="82" width="1" height="1"/><rect x="612" y="82" width="1" height="1"/></g><rect x="598.5" y="69.5" width="2" height="2" fill="#303030"/><text x="606" y="82" font-family="Liberation Serif" font-size="13" font-weight="bold" fill="#505050" text-anchor="middle">T</text><g stroke="#505050" fill="none" stroke-width="1.1"><path d="M631,76 L635.5,80.5 L643,70"/><path d="M632,73 L634.5,70.5 L637,73 H635.5 V75 H633.5 V73 Z"/><path d="M641,81 L643.5,83.5 L646,81 H644.5 V79 H642.5 V81 Z"/></g><polygon points="653,76 660,76 656.5,80" fill="#1a1a1a"/></svg>
<div style="position:absolute;left:357px;top:126px;width:157px;height:13px;background:linear-gradient(90deg,#bfd2e8,#d9e4f0)"></div>
<div style="position:absolute;left:360px;top:126px;white-space:nowrap;font-size:11.4px;line-height:13px;color:#000">Обзор рынка: 11:12:02</div>
<div style="position:absolute;left:516px;top:125px;white-space:nowrap;font-size:13px;line-height:14px;font-weight:bold;color:#000">×</div>
<div style="position:absolute;left:357px;top:140px;width:171px;height:54px;background:#fff;border-left:1px solid #a0a0a0;border-top:1px solid #d8d8d8"></div>
<div style="position:absolute;left:358px;top:165px;width:150px;height:20px;background:#e8e8e8;border-bottom:1px solid #dcdcdc"></div>
<div style="position:absolute;left:432px;top:141px;width:1px;height:53px;background:#e4e4e4"></div>
<div style="position:absolute;left:469px;top:141px;width:1px;height:53px;background:#e4e4e4"></div>
<div style="position:absolute;left:364px;top:146px;white-space:nowrap;font-size:12px;line-height:14px">Символ</div>
<div style="position:absolute;left:433px;top:146px;white-space:nowrap;font-size:12px;line-height:14px;width:33px;text-align:right">Bid</div>
<div style="position:absolute;left:470px;top:146px;white-space:nowrap;font-size:12px;line-height:14px;width:35px;text-align:right">Ask</div>
<div style="position:absolute;left:365px;top:172px;width:7px;height:7px;border-radius:50%;background:radial-gradient(circle at 40% 40%,#e8e8e8,#a8a8a8);border:1px solid #909090"></div>
<div style="position:absolute;left:379px;top:168px;white-space:nowrap;font-size:12px;line-height:14px">@KCE</div>
<div style="position:absolute;left:433px;top:168px;white-space:nowrap;font-size:12px;line-height:14px;width:34px;text-align:right;letter-spacing:-0.2px">92.90</div>
<div style="position:absolute;left:470px;top:168px;white-space:nowrap;font-size:12px;line-height:14px;width:35px;text-align:right;letter-spacing:-0.2px">93.15</div>
<div style="position:absolute;left:358px;top:184px;width:150px;height:9px;overflow:hidden"><div class="t" style="left:7px;top:5px;width:7px;height:7px;border-radius:50%;background:#c0c0c0"></div><div class="t" style="left:21px;top:3px;font-size:12px;line-height:14px">@MES</div><div class="t" style="left:75px;top:0;width:36px;height:9px;overflow:hidden"><div class="t" style="left:6px;top:3px;font-size:12px;line-height:14px;color:#0000ff">2900.00</div></div><div class="t" style="left:112px;top:0;width:38px;height:9px;overflow:hidden"><div class="t" style="left:8px;top:3px;font-size:12px;line-height:14px;color:#0000ff">2900.00</div></div></div>
<div style="position:absolute;left:508px;top:141px;width:19px;height:52px;background:#f0f0f0"></div>
<div style="position:absolute;left:510px;top:158px;width:15px;height:17px;background:#cdcdcd"></div>
<svg style="position:absolute;left:508px;top:141px" width="19" height="52"><path d="M5.5,12 L9.5,8 L13.5,12" stroke="#606060" stroke-width="2" fill="none"/><path d="M5.5,42 L9.5,46 L13.5,42" stroke="#606060" stroke-width="2" fill="none"/></svg>
<div style="position:absolute;left:357px;top:193px;width:171px;height:1px;background:#000"></div>
<div style="position:absolute;left:360px;top:193px;width:73px;height:21px;background:#fff;border:2px solid #000;border-top:none"></div>
<div style="position:absolute;left:370px;top:196px;white-space:nowrap;font-size:12px;line-height:15px">Символы</div>
<div style="position:absolute;left:443px;top:196px;white-space:nowrap;font-size:12px;line-height:15px;color:#8a8a8a">Детали</div>
<div style="position:absolute;left:492px;top:197px;width:1px;height:12px;background:#8a8a8a"></div>
<div style="position:absolute;left:502px;top:196px;white-space:nowrap;font-size:12px;line-height:15px;color:#8a8a8a;width:25px;overflow:hidden">Торг</div>
<div style="position:absolute;left:355px;top:217px;width:175px;height:1px;background:#b0b0b0"></div>
<div style="position:absolute;left:355px;top:218px;width:175px;height:1px;background:#fcfcfc"></div>
<div style="position:absolute;left:357px;top:221px;width:157px;height:14px;background:linear-gradient(90deg,#bfd2e8,#d9e4f0)"></div>
<div style="position:absolute;left:360px;top:221px;white-space:nowrap;font-size:11px;line-height:14px;color:#000">Навигатор</div>
<div style="position:absolute;left:516px;top:221px;white-space:nowrap;font-size:13px;line-height:14px;font-weight:bold;color:#000">×</div>
<div style="position:absolute;left:357px;top:236px;width:171px;height:192px;background:#fff;border-left:1px solid #a0a0a0;border-top:1px solid #d8d8d8"></div>
<div style="position:absolute;left:370px;top:236px;width:1px;height:192px;background:repeating-linear-gradient(180deg,#808080 0 1px,transparent 1px 2px)"></div>
<div style="position:absolute;left:391px;top:254px;width:1px;height:174px;background:repeating-linear-gradient(180deg,#808080 0 1px,transparent 1px 2px)"></div>
<div style="position:absolute;left:412px;top:272px;width:1px;height:156px;background:repeating-linear-gradient(180deg,#808080 0 1px,transparent 1px 2px)"></div>
<div class="t" style="left:366px;top:242px;width:9px;height:9px;background:#fff;border:1px solid #909090"><div class="t" style="left:1px;top:3px;width:5px;height:1px;background:#2040a0"></div></div>
<div style="position:absolute;left:376px;top:246px;width:7px;height:1px;background:repeating-linear-gradient(90deg,#808080 0 1px,transparent 1px 2px)"></div>
<div class="t" style="left:383px;top:239px;width:13px;height:13px;background:linear-gradient(180deg,#ffe070,#f0b000);border:1px solid #a07000;border-radius:1px;font-family:'Liberation Serif',serif;font-style:italic;font-weight:bold;font-size:12px;line-height:12px;text-align:center;color:#202020">f</div>
<div style="position:absolute;left:405px;top:239px;white-space:nowrap;font-size:12px;line-height:14px">Индикаторы</div>
<div class="t" style="left:387px;top:260px;width:9px;height:9px;background:#fff;border:1px solid #909090"><div class="t" style="left:1px;top:3px;width:5px;height:1px;background:#2040a0"></div></div>
<div style="position:absolute;left:397px;top:264px;width:7px;height:1px;background:repeating-linear-gradient(90deg,#808080 0 1px,transparent 1px 2px)"></div>
<div class="t" style="left:404px;top:257px;width:13px;height:13px;background:linear-gradient(180deg,#ffe070,#f0b000);border:1px solid #a07000;border-radius:1px;font-family:'Liberation Serif',serif;font-style:italic;font-weight:bold;font-size:12px;line-height:12px;text-align:center;color:#202020">f</div>
<div style="position:absolute;left:426px;top:257px;white-space:nowrap;font-size:12px;line-height:14px">Трендовые</div>
<div style="position:absolute;left:358px;top:236px;width:152px;height:192px;overflow:hidden">
<div class="t" style="left:55px;top:46px;width:12px;height:1px;background:repeating-linear-gradient(90deg,#808080 0 1px,transparent 1px 2px)"></div>
<div class="t" style="left:67px;top:39px;width:13px;height:13px;background:linear-gradient(180deg,#ffe070,#f0b000);border:1px solid #a07000;border-radius:1px;font-family:'Liberation Serif',serif;font-style:italic;font-weight:bold;font-size:12px;line-height:12px;text-align:center;color:#202020">f</div>
<div class="t" style="left:89px;top:39px;font-size:12px;line-height:14px">Adaptive Moving Average</div>
<div class="t" style="left:55px;top:64px;width:12px;height:1px;background:repeating-linear-gradient(90deg,#808080 0 1px,transparent 1px 2px)"></div>
<div class="t" style="left:67px;top:57px;width:13px;height:13px;background:linear-gradient(180deg,#ffe070,#f0b000);border:1px solid #a07000;border-radius:1px;font-family:'Liberation Serif',serif;font-style:italic;font-weight:bold;font-size:12px;line-height:12px;text-align:center;color:#202020">f</div>
<div class="t" style="left:89px;top:57px;font-size:12px;line-height:14px">Average Directional</div>
<div class="t" style="left:55px;top:82px;width:12px;height:1px;background:repeating-linear-gradient(90deg,#808080 0 1px,transparent 1px 2px)"></div>
<div class="t" style="left:67px;top:75px;width:13px;height:13px;background:linear-gradient(180deg,#ffe070,#f0b000);border:1px solid #a07000;border-radius:1px;font-family:'Liberation Serif',serif;font-style:italic;font-weight:bold;font-size:12px;line-height:12px;text-align:center;color:#202020">f</div>
<div class="t" style="left:89px;top:75px;font-size:12px;line-height:14px">Average Directional</div>
<div class="t" style="left:55px;top:100px;width:12px;height:1px;background:repeating-linear-gradient(90deg,#808080 0 1px,transparent 1px 2px)"></div>
<div class="t" style="left:67px;top:93px;width:13px;height:13px;background:linear-gradient(180deg,#ffe070,#f0b000);border:1px solid #a07000;border-radius:1px;font-family:'Liberation Serif',serif;font-style:italic;font-weight:bold;font-size:12px;line-height:12px;text-align:center;color:#202020">f</div>
<div class="t" style="left:89px;top:93px;font-size:12px;line-height:14px">Bollinger Bands</div>
<div class="t" style="left:55px;top:118px;width:12px;height:1px;background:repeating-linear-gradient(90deg,#808080 0 1px,transparent 1px 2px)"></div>
<div class="t" style="left:67px;top:111px;width:13px;height:13px;background:linear-gradient(180deg,#ffe070,#f0b000);border:1px solid #a07000;border-radius:1px;font-family:'Liberation Serif',serif;font-style:italic;font-weight:bold;font-size:12px;line-height:12px;text-align:center;color:#202020">f</div>
<div class="t" style="left:89px;top:111px;font-size:12px;line-height:14px">Double Exponential</div>
<div class="t" style="left:55px;top:136px;width:12px;height:1px;background:repeating-linear-gradient(90deg,#808080 0 1px,transparent 1px 2px)"></div>
<div class="t" style="left:67px;top:129px;width:13px;height:13px;background:linear-gradient(180deg,#ffe070,#f0b000);border:1px solid #a07000;border-radius:1px;font-family:'Liberation Serif',serif;font-style:italic;font-weight:bold;font-size:12px;line-height:12px;text-align:center;color:#202020">f</div>
<div class="t" style="left:89px;top:129px;font-size:12px;line-height:14px">Envelopes</div>
<div class="t" style="left:55px;top:154px;width:12px;height:1px;background:repeating-linear-gradient(90deg,#808080 0 1px,transparent 1px 2px)"></div>
<div class="t" style="left:67px;top:147px;width:13px;height:13px;background:linear-gradient(180deg,#ffe070,#f0b000);border:1px solid #a07000;border-radius:1px;font-family:'Liberation Serif',serif;font-style:italic;font-weight:bold;font-size:12px;line-height:12px;text-align:center;color:#202020">f</div>
<div class="t" style="left:89px;top:147px;font-size:12px;line-height:14px">Fractal Adaptive</div>
<div class="t" style="left:55px;top:172px;width:12px;height:1px;background:repeating-linear-gradient(90deg,#808080 0 1px,transparent 1px 2px)"></div>
<div class="t" style="left:67px;top:165px;width:13px;height:13px;background:linear-gradient(180deg,#ffe070,#f0b000);border:1px solid #a07000;border-radius:1px;font-family:'Liberation Serif',serif;font-style:italic;font-weight:bold;font-size:12px;line-height:12px;text-align:center;color:#202020">f</div>
<div class="t" style="left:89px;top:165px;font-size:12px;line-height:14px">Ichimoku Kinko</div>
<div class="t" style="left:55px;top:190px;width:12px;height:1px;background:repeating-linear-gradient(90deg,#808080 0 1px,transparent 1px 2px)"></div>
<div class="t" style="left:67px;top:183px;width:13px;height:13px;background:linear-gradient(180deg,#ffe070,#f0b000);border:1px solid #a07000;border-radius:1px;font-family:'Liberation Serif',serif;font-style:italic;font-weight:bold;font-size:12px;line-height:12px;text-align:center;color:#202020">f</div>
<div class="t" style="left:89px;top:183px;font-size:12px;line-height:14px">Moving Average</div>
</div>
<div style="position:absolute;left:510px;top:236px;width:17px;height:192px;background:#f0f0f0"></div>
<div style="position:absolute;left:511px;top:266px;width:15px;height:57px;background:#cdcdcd"></div>
<svg style="position:absolute;left:510px;top:236px" width="17" height="192"><path d="M4.5,13 L8.5,9 L12.5,13" stroke="#606060" stroke-width="2" fill="none"/><path d="M4.5,180 L8.5,184 L12.5,180" stroke="#606060" stroke-width="2" fill="none"/></svg>
<div style="position:absolute;left:357px;top:427px;width:171px;height:1px;background:#000"></div>
<div style="position:absolute;left:360px;top:427px;width:61px;height:21px;background:#fff;border:2px solid #000;border-top:none"></div>
<div style="position:absolute;left:370px;top:430px;white-space:nowrap;font-size:12px;line-height:15px">Общие</div>
<div style="position:absolute;left:430px;top:430px;white-space:nowrap;font-size:12px;line-height:15px;color:#8a8a8a">Избранное</div>
<div style="position:absolute;left:530px;top:124px;width:1px;height:331px;background:#a0a0a0"></div>
<div style="position:absolute;left:531px;top:124px;width:593px;height:308px;background:#fff;border-left:1px solid #909090;border-top:1px solid #808080;"></div>
<div style="position:absolute;left:1123px;top:124px;width:2px;height:308px;background:#a0a0a0"></div>
<svg style="position:absolute;left:535px;top:127px" width="18" height="16"><rect x="0.5" y="0.5" width="11" height="9" fill="#fff" stroke="#2a78d8"/><rect x="3.5" y="3.5" width="13" height="11" fill="#fff" stroke="#2a78d8" stroke-width="1.2"/><rect x="3.5" y="3.5" width="13" height="2" fill="#2a78d8"/><path d="M5,12 L8,9 L11,11 L15,7" stroke="#f05020" stroke-width="1.3" fill="none"/></svg>
<div style="position:absolute;left:554px;top:128px;white-space:nowrap;font-size:11.5px;line-height:14px;color:#000">EPM20,M10</div>
<svg style="position:absolute;left:1020px;top:126px" width="92" height="20"><rect x="5" y="12" width="9" height="2" fill="#000"/><rect x="39.5" y="4.5" width="10" height="10" fill="none" stroke="#000" stroke-width="1.4"/><path d="M76,5 L84,13 M84,5 L76,13" stroke="#000" stroke-width="1.8"/></svg>
<div style="position:absolute;left:531px;top:149px;width:586px;height:1px;background:#a0a0a0"></div>
<div style="position:absolute;left:1116px;top:149px;width:1px;height:283px;background:#d0d0d0"></div>
<div style="position:absolute;left:535px;top:153px;width:529px;height:279px;background:#fff;border-left:1px solid #000;border-top:1px solid #000;border-right:1px solid #000"></div>
<svg style="position:absolute;left:0;top:0" width="1428" height="802"><line x1="855.5" y1="154" x2="855.5" y2="431" stroke="#2f4f4f" stroke-width="1" stroke-dasharray="3,3"/><line x1="887.5" y1="154" x2="887.5" y2="431" stroke="#2f4f4f" stroke-width="1" stroke-dasharray="3,3"/><line x1="919.5" y1="154" x2="919.5" y2="431" stroke="#2f4f4f" stroke-width="1" stroke-dasharray="3,3"/><line x1="951.5" y1="154" x2="951.5" y2="431" stroke="#2f4f4f" stroke-width="1" stroke-dasharray="3,3"/><line x1="983.5" y1="154" x2="983.5" y2="431" stroke="#2f4f4f" stroke-width="1" stroke-dasharray="3,3"/><line x1="1015.5" y1="154" x2="1015.5" y2="431" stroke="#2f4f4f" stroke-width="1" stroke-dasharray="3,3"/><line x1="1047.5" y1="154" x2="1047.5" y2="431" stroke="#2f4f4f" stroke-width="1" stroke-dasharray="3,3"/><line x1="536" y1="167.5" x2="1063" y2="167.5" stroke="#2f4f4f" stroke-width="1" stroke-dasharray="3,3"/><line x1="536" y1="201.5" x2="1063" y2="201.5" stroke="#2f4f4f" stroke-width="1" stroke-dasharray="3,3"/><line x1="536" y1="235.5" x2="1063" y2="235.5" stroke="#2f4f4f" stroke-width="1" stroke-dasharray="3,3"/><line x1="536" y1="269.5" x2="1063" y2="269.5" stroke="#2f4f4f" stroke-width="1" stroke-dasharray="3,3"/><line x1="536" y1="303.5" x2="1063" y2="303.5" stroke="#2f4f4f" stroke-width="1" stroke-dasharray="3,3"/><line x1="536" y1="337.5" x2="1063" y2="337.5" stroke="#2f4f4f" stroke-width="1" stroke-dasharray="3,3"/><line x1="536" y1="371.5" x2="1063" y2="371.5" stroke="#2f4f4f" stroke-width="1" stroke-dasharray="3,3"/><line x1="536" y1="405.5" x2="1063" y2="405.5" stroke="#2f4f4f" stroke-width="1" stroke-dasharray="3,3"/><line x1="1063" y1="167.5" x2="1067" y2="167.5" stroke="#000"/><text x="1068" y="171.0" font-family="Liberation Sans" font-size="9.5" fill="#000" textLength="33" lengthAdjust="spacingAndGlyphs">2908.00</text><line x1="1063" y1="201.5" x2="1067" y2="201.5" stroke="#000"/><text x="1068" y="205.0" font-family="Liberation Sans" font-size="9.5" fill="#000" textLength="33" lengthAdjust="spacingAndGlyphs">2905.50</text><line x1="1063" y1="235.5" x2="1067" y2="235.5" stroke="#000"/><text x="1068" y="239.0" font-family="Liberation Sans" font-size="9.5" fill="#000" textLength="33" lengthAdjust="spacingAndGlyphs">2903.00</text><line x1="1063" y1="269.5" x2="1067" y2="269.5" stroke="#000"/><text x="1068" y="273.0" font-family="Liberation Sans" font-size="9.5" fill="#000" textLength="33" lengthAdjust="spacingAndGlyphs">2900.50</text><line x1="1063" y1="303.5" x2="1067" y2="303.5" stroke="#000"/><text x="1068" y="307.0" font-family="Liberation Sans" font-size="9.5" fill="#000" textLength="33" lengthAdjust="spacingAndGlyphs">2898.00</text><line x1="1063" y1="337.5" x2="1067" y2="337.5" stroke="#000"/><text x="1068" y="341.0" font-family="Liberation Sans" font-size="9.5" fill="#000" textLength="33" lengthAdjust="spacingAndGlyphs">2895.50</text><line x1="1063" y1="371.5" x2="1067" y2="371.5" stroke="#000"/><text x="1068" y="375.0" font-family="Liberation Sans" font-size="9.5" fill="#000" textLength="33" lengthAdjust="spacingAndGlyphs">2893.00</text><line x1="1063" y1="405.5" x2="1067" y2="405.5" stroke="#000"/><text x="1068" y="409.0" font-family="Liberation Sans" font-size="9.5" fill="#000" textLength="33" lengthAdjust="spacingAndGlyphs">2890.50</text><line x1="536" y1="249.5" x2="1063" y2="249.5" stroke="#2f4f4f" stroke-width="1"/><rect x="1066" y="244" width="39" height="11" fill="#2f4f4f"/><text x="1068" y="253" font-family="Liberation Sans" font-size="9.5" fill="#fff" textLength="33" lengthAdjust="spacingAndGlyphs">2902.00</text><line x1="855.5" y1="226" x2="855.5" y2="277" stroke="#000" stroke-width="1"/><rect x="844.5" y="249.5" width="22" height="13" fill="#008000" stroke="#000" stroke-width="1"/><line x1="887.5" y1="203" x2="887.5" y2="275" stroke="#000" stroke-width="1"/><rect x="876.5" y="218.5" width="22" height="34" fill="#008000" stroke="#000" stroke-width="1"/><line x1="919.5" y1="177" x2="919.5" y2="248" stroke="#000" stroke-width="1"/><rect x="908.5" y="218.5" width="22" height="27" fill="#ff0000" stroke="#000" stroke-width="1"/><line x1="951.5" y1="235" x2="951.5" y2="267" stroke="#000" stroke-width="1"/><rect x="940.5" y="245.5" width="22" height="21" fill="#ff0000" stroke="#000" stroke-width="1"/><line x1="983.5" y1="262" x2="983.5" y2="287" stroke="#000" stroke-width="1"/><rect x="972.5" y="262.5" width="22" height="24" fill="#ff0000" stroke="#000" stroke-width="1"/><line x1="1015.5" y1="244" x2="1015.5" y2="287" stroke="#000" stroke-width="1"/><rect x="1004.5" y="249.5" width="22" height="37" fill="#008000" stroke="#000" stroke-width="1"/><polyline points="838,364.6 886,309.6 904,292.7 919.4,276.7 940,266.8 956,259.8 983.7,255.8 1014.6,252.2" fill="none" stroke="#10108a" stroke-width="1"/><line x1="838" y1="243.5" x2="883" y2="227" stroke="#e05030" stroke-dasharray="3,3"/><line x1="887.5" y1="217" x2="919" y2="202" stroke="#2a78c8" stroke-dasharray="3,3"/><line x1="919.4" y1="247" x2="983" y2="283" stroke="#e05030" stroke-dasharray="3,3"/><line x1="919.5" y1="209" x2="919.5" y2="247" stroke="#e05030" stroke-dasharray="2,2"/><polygon points="919.4,191.5 924.4,196.5 921.4,196.5 921.4,199.5 917.4,199.5 917.4,196.5 914.4,196.5" fill="#1a6ec8" stroke="#fff" stroke-width="0.8"/><polygon points="887.5,218.5 892.5,223.5 889.5,223.5 889.5,226.5 885.5,226.5 885.5,223.5 882.5,223.5" fill="#1a6ec8" stroke="#fff" stroke-width="0.8"/><polygon points="887.5,225.5 892.5,230.5 889.5,230.5 889.5,233.5 885.5,233.5 885.5,230.5 882.5,230.5" fill="#1a6ec8" stroke="#fff" stroke-width="0.8"/><polygon points="919.4,243.0 924.4,248.0 921.4,248.0 921.4,251.0 917.4,251.0 917.4,248.0 914.4,248.0" fill="#1a6ec8" stroke="#fff" stroke-width="0.8"/><polygon points="951.4,266.5 956.4,271.5 953.4,271.5 953.4,274.5 949.4,274.5 949.4,271.5 946.4,271.5" fill="#1a6ec8" stroke="#fff" stroke-width="0.8"/><polygon points="983.3,286.5 988.3,291.5 985.3,291.5 985.3,294.5 981.3,294.5 981.3,291.5 978.3,291.5" fill="#1a6ec8" stroke="#fff" stroke-width="0.8"/><polygon points="983.3,293.5 988.3,298.5 985.3,298.5 985.3,301.5 981.3,301.5 981.3,298.5 978.3,298.5" fill="#1a6ec8" stroke="#fff" stroke-width="0.8"/><polygon points="919.4,214.0 924.4,209.0 921.4,209.0 921.4,206.0 917.4,206.0 917.4,209.0 914.4,209.0" fill="#e05030" stroke="#fff" stroke-width="0.8"/><polygon points="919.4,225.5 924.4,220.5 921.4,220.5 921.4,217.5 917.4,217.5 917.4,220.5 914.4,220.5" fill="#e05030" stroke="#fff" stroke-width="0.8"/><polygon points="919.4,245.5 924.4,240.5 921.4,240.5 921.4,237.5 917.4,237.5 917.4,240.5 914.4,240.5" fill="#e05030" stroke="#fff" stroke-width="0.8"/><polygon points="951.4,262.0 956.4,257.0 953.4,257.0 953.4,254.0 949.4,254.0 949.4,257.0 946.4,257.0" fill="#e05030" stroke="#fff" stroke-width="0.8"/><polygon points="983.3,276.5 988.3,271.5 985.3,271.5 985.3,268.5 981.3,268.5 981.3,271.5 978.3,271.5" fill="#e05030" stroke="#fff" stroke-width="0.8"/><text x="956" y="169" font-family="Liberation Sans" font-size="10.5" fill="#000" textLength="86" lengthAdjust="spacingAndGlyphs">VirtualTradePad  Lite</text><g transform="translate(1044,153)"><path d="M1.5,14 C1.5,10 4,8.5 6.5,8.5 C9,8.5 11,10 11,14 Q11,17.5 6.5,17.5 Q1.5,17.5 1.5,14 Z" fill="#6ab8f0"/><path d="M4.5,8.5 H10.5 L8.5,13 H6.5 Z" fill="#d89810"/><path d="M3.5,5 H11.5 V8.5 Q7.5,10 3.5,8.5 Z" fill="#606060"/><path d="M1,3.5 L8.5,1 L14,4.5 L7,7 Z" fill="#c0c0c0"/><circle cx="12.5" cy="13" r="5" fill="#40c020" stroke="#306030" stroke-width="0.8"/><polygon points="11.5,10.3 11.5,15.7 15.3,13" fill="#fff"/></g></svg>
<div style="position:absolute;left:1124px;top:124px;width:304px;height:308px;background:#f0f0f0;border-top:1px solid #808080;"></div>
<svg style="position:absolute;left:1133px;top:124px" width="18" height="16"><rect x="0.5" y="0.5" width="11" height="9" fill="#fff" stroke="#2a78d8"/><rect x="3.5" y="3.5" width="13" height="11" fill="#fff" stroke="#2a78d8" stroke-width="1.2"/><rect x="3.5" y="3.5" width="13" height="2" fill="#2a78d8"/><path d="M5,12 L8,9 L11,11 L15,7" stroke="#f05020" stroke-width="1.3" fill="none"/></svg>
<div style="position:absolute;left:1153px;top:124px;white-space:nowrap;font-size:11.5px;line-height:14px;color:#707070">EPM20,M10</div>
<div style="position:absolute;left:1131px;top:146px;width:297px;height:286px;background:#fff;border-left:1px solid #909090;border-top:1px solid #909090"></div>
<div style="position:absolute;left:1134px;top:149px;width:294px;height:283px;background:#fff;border-left:1px solid #000;border-top:1px solid #000"></div>
<div style="position:absolute;left:536px;top:154px;width:302px;height:277px;overflow:hidden">
<div class="t" style="left:0px;top:0px;width:302px;height:300px;background:#000"></div>
<div class="t" style="left:24px;top:64px;width:253px;height:240px;background:radial-gradient(ellipse 130px 235px at 127px 150px,#1b2846 0%,#141d33 48%,#0a0f1b 80%,rgba(0,0,0,0) 100%);-webkit-mask-image:linear-gradient(180deg,transparent 0,#000 60px)"></div>
<div class="t" style="left:0px;top:0px;width:1px;height:300px;background:#1a8ae0"></div>
<div class="t" style="left:301px;top:0px;width:1px;height:300px;background:#3cc0ff"></div>
<div class="t" style="left:2px;top:1px;width:299px;height:30px;border:1px solid #00e0ff"></div>
<svg class="t" style="position:absolute;left:4px;top:3px" width="32" height="13"><rect x="0.5" y="0.5" width="13" height="11.5" fill="#fff" stroke="#e8e8f0"/><rect x="1" y="1" width="12" height="1.6" fill="#7878e8"/><rect x="2" y="3.6" width="4.5" height="0.9" fill="#e06060"/><rect x="7.5" y="3.6" width="4.5" height="0.9" fill="#6060e8"/><rect x="2" y="5.2" width="4.5" height="0.9" fill="#e06060"/><rect x="7.5" y="5.2" width="4.5" height="0.9" fill="#6060e8"/><rect x="2" y="6.800000000000001" width="4.5" height="0.9" fill="#e06060"/><rect x="7.5" y="6.800000000000001" width="4.5" height="0.9" fill="#6060e8"/><rect x="2" y="8.4" width="4.5" height="0.9" fill="#e06060"/><rect x="7.5" y="8.4" width="4.5" height="0.9" fill="#6060e8"/><rect x="2" y="10.0" width="4.5" height="0.9" fill="#e06060"/><rect x="7.5" y="10.0" width="4.5" height="0.9" fill="#6060e8"/><path d="M17,1 H21 V5 H24 V11.5 Q24,12 23.5,12 H17.5 Q17,12 17,11.5 Z" fill="#2a2ae8"/><path d="M23,1 H30.5 Q31,1 31,1.5 V11.5 Q31,12 30.5,12 H24 V5 Z" fill="#c83838"/><rect x="21" y="0.5" width="6" height="2.5" fill="#c0c0c0"/><rect x="18" y="10" width="5" height="0.8" fill="#8080ff"/><rect x="25" y="10" width="5" height="0.8" fill="#ff8080"/></svg>
<div class="t" style="left:15px;top:6px;font-family:'Liberation Serif',serif;font-size:17px;line-height:20px;color:#fff;letter-spacing:1.85px">11:12:02</div>
<svg class="t" style="position:absolute;left:138px;top:10px" width="26" height="12"><polygon points="6,0 6,11 0.5,5.5" fill="#1a9ae8"/><polygon points="19,0 19,11 24.5,5.5" fill="#1a9ae8"/></svg>
<div class="t" style="left:246px;top:6px;width:22px;height:22px;background:#4a4e58;border-radius:3px"></div>
<div class="t" style="left:253px;top:22px;width:8px;height:2px;background:#fff"></div>
<div class="t" style="left:270px;top:6px;width:22px;height:22px;background:#4a4e58;border-radius:3px"></div>
<svg class="t" style="position:absolute;left:270px;top:6px" width="22" height="22"><path d="M6,6 L16,16 M16,6 L6,16" stroke="#fff" stroke-width="2.2"/></svg>
<div class="t" style="left:8px;top:32px;width:282px;height:31px;border:1px solid #1a98d0;border-radius:2px"></div>
<div class="t" style="left:22px;top:43px;font-size:13px;line-height:16px;color:#fff;letter-spacing:0.6px">Позиция</div>
<div class="t" style="left:93px;top:43px;font-size:13px;line-height:16px;color:#00ff00;letter-spacing:0.6px">Ордер</div>
<div class="t" style="left:143px;top:43px;font-size:13px;line-height:16px;color:#fff;letter-spacing:0.6px">Сигнал</div>
<div class="t" style="left:202px;top:43px;font-size:13px;line-height:16px;color:#fff;letter-spacing:0.6px">Инфо</div>
<div class="t" style="left:247px;top:43px;font-size:13px;line-height:16px;color:#fff;letter-spacing:0.6px">CLP</div>
<div class="t" style="left:276px;top:46px;width:8px;height:8px;background:#ff0000;border-radius:2px"></div>
<div class="t" style="left:95px;top:57px;width:30px;height:5px;background:#1e4a5a"></div>
<div class="t" style="left:97px;top:60px;width:26px;height:2px;background:#fff"></div>
<div class="t" style="left:18px;top:85px;font-size:15px;line-height:18px;color:#fff;letter-spacing:0.6px">Установить</div>
<div class="t" style="left:201px;top:85px;font-size:15px;line-height:18px;color:#fff;letter-spacing:0.6px">Удалить</div>
<div class="t" style="left:18px;top:101px;width:102px;height:4px;border:2px solid #0aa0e0;border-bottom:none;border-radius:1px"></div>
<div class="t" style="left:18px;top:229px;width:102px;height:4px;border:2px solid #0aa0e0;border-top:none;border-radius:1px"></div>
<div class="t" style="left:175px;top:101px;width:102px;height:4px;border:2px solid #0aa0e0;border-bottom:none;border-radius:1px"></div>
<div class="t" style="left:175px;top:229px;width:102px;height:4px;border:2px solid #0aa0e0;border-top:none;border-radius:1px"></div>
<div class="t" style="left:24px;top:108px;width:91px;height:21px;background:#2e2e2e;border:1px solid #6a6a6a;border-radius:2px;color:#14a6f2;font-size:13px;line-height:19px;text-align:center;letter-spacing:0.3px">BUY STOP</div>
<div class="t" style="left:24px;top:134px;width:91px;height:21px;background:#2e2e2e;border:1px solid #6a6a6a;border-radius:2px;color:#ec0c0c;font-size:13px;line-height:19px;text-align:center;letter-spacing:0.3px">SELL STOP</div>
<div class="t" style="left:24px;top:177px;width:91px;height:21px;background:#2e2e2e;border:1px solid #6a6a6a;border-radius:2px;color:#14a6f2;font-size:13px;line-height:19px;text-align:center;letter-spacing:0.3px">BUY LIMIT</div>
<div class="t" style="left:24px;top:204px;width:91px;height:21px;background:#2e2e2e;border:1px solid #6a6a6a;border-radius:2px;color:#ec0c0c;font-size:13px;line-height:19px;text-align:center;letter-spacing:0.3px">SELL LIMIT</div>
<div class="t" style="left:25px;top:165px;width:86px;height:1px;background:#0a9ad8"></div>
<div class="t" style="left:181px;top:108px;width:91px;height:21px;background:#2e2e2e;border:1px solid #6a6a6a;border-radius:2px;color:#14a6f2;font-size:13px;line-height:19px;text-align:center;letter-spacing:0.3px">BUY STOP</div>
<div class="t" style="left:181px;top:134px;width:91px;height:21px;background:#2e2e2e;border:1px solid #6a6a6a;border-radius:2px;color:#ec0c0c;font-size:13px;line-height:19px;text-align:center;letter-spacing:0.3px">SELL STOP</div>
<div class="t" style="left:181px;top:177px;width:91px;height:21px;background:#2e2e2e;border:1px solid #6a6a6a;border-radius:2px;color:#14a6f2;font-size:13px;line-height:19px;text-align:center;letter-spacing:0.3px">BUY LIMIT</div>
<div class="t" style="left:181px;top:204px;width:91px;height:21px;background:#2e2e2e;border:1px solid #6a6a6a;border-radius:2px;color:#ec0c0c;font-size:13px;line-height:19px;text-align:center;letter-spacing:0.3px">SELL LIMIT</div>
<div class="t" style="left:182px;top:165px;width:86px;height:1px;background:#0a9ad8"></div>
<svg class="t" style="position:absolute;left:125px;top:138px" width="50" height="50"><defs><linearGradient id="g10" x1="0" y1="0" x2="0" y2="1"><stop offset="0" stop-color="#62a010"/><stop offset="1" stop-color="#2a5010"/></linearGradient><linearGradient id="g20" x1="0" y1="0" x2="0" y2="1"><stop offset="0" stop-color="#d0e0b8"/><stop offset="1" stop-color="#a8b898"/></linearGradient><linearGradient id="g30" x1="0" y1="0" x2="0" y2="1"><stop offset="0" stop-color="#5aa0c0"/><stop offset="1" stop-color="#4048a8"/></linearGradient></defs><circle cx="25" cy="24.7" r="24.5" fill="url(#g10)"/><circle cx="25" cy="24.7" r="19.5" fill="url(#g20)"/><circle cx="25" cy="24.7" r="13.8" fill="url(#g30)"/><circle cx="25" cy="24.7" r="9" fill="#c8d8e2"/><circle cx="25" cy="24.7" r="5" fill="#e04050"/><circle cx="25" cy="24.7" r="2" fill="#901020"/></svg>
<div class="t" style="left:9px;top:265px;width:116px;height:5px;border:2px solid #0aa0e0;border-bottom:none;border-radius:2px"></div>
<div class="t" style="left:172px;top:265px;width:117px;height:5px;border:2px solid #0aa0e0;border-bottom:none;border-radius:2px"></div>
<div class="t" style="left:11px;top:269px;width:18px;height:18px;background:#2a3038;border:1px solid #505860"></div>
<div class="t" style="left:175px;top:269px;width:18px;height:18px;background:#2a3038;border:1px solid #505860"></div>
<div class="t" style="left:103px;top:269px;width:19px;height:18px;background:#2a3038;border:1px solid #505860"></div>
<svg class="t" style="position:absolute;left:103px;top:269px" width="19" height="18"><path d="M3,14 C6,6 10,16 16,7" stroke="#c0f000" stroke-width="2" fill="none"/></svg>
<div class="t" style="left:267px;top:269px;width:19px;height:18px;background:#2a3038;border:1px solid #505860"></div>
<svg class="t" style="position:absolute;left:267px;top:269px" width="19" height="18"><path d="M3,14 C6,6 10,16 16,7" stroke="#c0f000" stroke-width="2" fill="none"/></svg>
<svg class="t" style="position:absolute;left:11px;top:269px" width="18" height="18"><path d="M4,9 L8,13 L15,4" stroke="#1a8ae8" stroke-width="2.4" fill="none"/></svg>
<div class="t" style="left:33px;top:268px;font-size:14px;line-height:18px;color:#fff">Стоплосс</div>
<div class="t" style="left:196px;top:268px;font-size:14px;line-height:18px;color:#fff">Тейкпроф</div>
</div>
<div style="position:absolute;left:1135px;top:150px;width:293px;height:281px;overflow:hidden">
<div class="t" style="left:0px;top:0px;width:302px;height:300px;background:#000"></div>
<div class="t" style="left:24px;top:64px;width:253px;height:240px;background:radial-gradient(ellipse 130px 235px at 127px 150px,#1b2846 0%,#141d33 48%,#0a0f1b 80%,rgba(0,0,0,0) 100%);-webkit-mask-image:linear-gradient(180deg,transparent 0,#000 60px)"></div>
<div class="t" style="left:0px;top:0px;width:1px;height:300px;background:#1a8ae0"></div>
<div class="t" style="left:301px;top:0px;width:1px;height:300px;background:#3cc0ff"></div>
<div class="t" style="left:2px;top:1px;width:299px;height:30px;border:1px solid #00e0ff"></div>
<svg class="t" style="position:absolute;left:4px;top:3px" width="32" height="13"><rect x="0.5" y="0.5" width="13" height="11.5" fill="#fff" stroke="#e8e8f0"/><rect x="1" y="1" width="12" height="1.6" fill="#7878e8"/><rect x="2" y="3.6" width="4.5" height="0.9" fill="#e06060"/><rect x="7.5" y="3.6" width="4.5" height="0.9" fill="#6060e8"/><rect x="2" y="5.2" width="4.5" height="0.9" fill="#e06060"/><rect x="7.5" y="5.2" width="4.5" height="0.9" fill="#6060e8"/><rect x="2" y="6.800000000000001" width="4.5" height="0.9" fill="#e06060"/><rect x="7.5" y="6.800000000000001" width="4.5" height="0.9" fill="#6060e8"/><rect x="2" y="8.4" width="4.5" height="0.9" fill="#e06060"/><rect x="7.5" y="8.4" width="4.5" height="0.9" fill="#6060e8"/><rect x="2" y="10.0" width="4.5" height="0.9" fill="#e06060"/><rect x="7.5" y="10.0" width="4.5" height="0.9" fill="#6060e8"/><path d="M17,1 H21 V5 H24 V11.5 Q24,12 23.5,12 H17.5 Q17,12 17,11.5 Z" fill="#2a2ae8"/><path d="M23,1 H30.5 Q31,1 31,1.5 V11.5 Q31,12 30.5,12 H24 V5 Z" fill="#c83838"/><rect x="21" y="0.5" width="6" height="2.5" fill="#c0c0c0"/><rect x="18" y="10" width="5" height="0.8" fill="#8080ff"/><rect x="25" y="10" width="5" height="0.8" fill="#ff8080"/></svg>
<div class="t" style="left:15px;top:6px;font-family:'Liberation Serif',serif;font-size:17px;line-height:20px;color:#fff;letter-spacing:1.85px">11:12:02</div>
<svg class="t" style="position:absolute;left:138px;top:10px" width="26" height="12"><polygon points="6,0 6,11 0.5,5.5" fill="#1a9ae8"/><polygon points="19,0 19,11 24.5,5.5" fill="#1a9ae8"/></svg>
<div class="t" style="left:246px;top:6px;width:22px;height:22px;background:#4a4e58;border-radius:3px"></div>
<div class="t" style="left:253px;top:22px;width:8px;height:2px;background:#fff"></div>
<div class="t" style="left:270px;top:6px;width:22px;height:22px;background:#4a4e58;border-radius:3px"></div>
<svg class="t" style="position:absolute;left:270px;top:6px" width="22" height="22"><path d="M6,6 L16,16 M16,6 L6,16" stroke="#fff" stroke-width="2.2"/></svg>
<div class="t" style="left:8px;top:32px;width:282px;height:31px;border:1px solid #1a98d0;border-radius:2px"></div>
<div class="t" style="left:22px;top:43px;font-size:13px;line-height:16px;color:#fff;letter-spacing:0.6px">Позиция</div>
<div class="t" style="left:93px;top:43px;font-size:13px;line-height:16px;color:#00ff00;letter-spacing:0.6px">Ордер</div>
<div class="t" style="left:143px;top:43px;font-size:13px;line-height:16px;color:#fff;letter-spacing:0.6px">Сигнал</div>
<div class="t" style="left:202px;top:43px;font-size:13px;line-height:16px;color:#fff;letter-spacing:0.6px">Инфо</div>
<div class="t" style="left:247px;top:43px;font-size:13px;line-height:16px;color:#fff;letter-spacing:0.6px">CLP</div>
<div class="t" style="left:276px;top:46px;width:8px;height:8px;background:#ff0000;border-radius:2px"></div>
<div class="t" style="left:95px;top:57px;width:30px;height:5px;background:#1e4a5a"></div>
<div class="t" style="left:97px;top:60px;width:26px;height:2px;background:#fff"></div>
<div class="t" style="left:18px;top:85px;font-size:15px;line-height:18px;color:#fff;letter-spacing:0.6px">Установить</div>
<div class="t" style="left:201px;top:85px;font-size:15px;line-height:18px;color:#fff;letter-spacing:0.6px">Удалить</div>
<div class="t" style="left:18px;top:101px;width:102px;height:4px;border:2px solid #0aa0e0;border-bottom:none;border-radius:1px"></div>
<div class="t" style="left:18px;top:229px;width:102px;height:4px;border:2px solid #0aa0e0;border-top:none;border-radius:1px"></div>
<div class="t" style="left:175px;top:101px;width:102px;height:4px;border:2px solid #0aa0e0;border-bottom:none;border-radius:1px"></div>
<div class="t" style="left:175px;top:229px;width:102px;height:4px;border:2px solid #0aa0e0;border-top:none;border-radius:1px"></div>
<div class="t" style="left:24px;top:108px;width:91px;height:21px;background:#2e2e2e;border:1px solid #6a6a6a;border-radius:2px;color:#14a6f2;font-size:13px;line-height:19px;text-align:center;letter-spacing:0.3px">BUY STOP</div>
<div class="t" style="left:24px;top:134px;width:91px;height:21px;background:#2e2e2e;border:1px solid #6a6a6a;border-radius:2px;color:#ec0c0c;font-size:13px;line-height:19px;text-align:center;letter-spacing:0.3px">SELL STOP</div>
<div class="t" style="left:24px;top:177px;width:91px;height:21px;background:#2e2e2e;border:1px solid #6a6a6a;border-radius:2px;color:#14a6f2;font-size:13px;line-height:19px;text-align:center;letter-spacing:0.3px">BUY LIMIT</div>
<div class="t" style="left:24px;top:204px;width:91px;height:21px;background:#2e2e2e;border:1px solid #6a6a6a;border-radius:2px;color:#ec0c0c;font-size:13px;line-height:19px;text-align:center;letter-spacing:0.3px">SELL LIMIT</div>
<div class="t" style="left:25px;top:165px;width:86px;height:1px;background:#0a9ad8"></div>
<div class="t" style="left:181px;top:108px;width:91px;height:21px;background:#2e2e2e;border:1px solid #6a6a6a;border-radius:2px;color:#14a6f2;font-size:13px;line-height:19px;text-align:center;letter-spacing:0.3px">BUY STOP</div>
<div class="t" style="left:181px;top:134px;width:91px;height:21px;background:#2e2e2e;border:1px solid #6a6a6a;border-radius:2px;color:#ec0c0c;font-size:13px;line-height:19px;text-align:center;letter-spacing:0.3px">SELL STOP</div>
<div class="t" style="left:181px;top:177px;width:91px;height:21px;background:#2e2e2e;border:1px solid #6a6a6a;border-radius:2px;color:#14a6f2;font-size:13px;line-height:19px;text-align:center;letter-spacing:0.3px">BUY LIMIT</div>
<div class="t" style="left:181px;top:204px;width:91px;height:21px;background:#2e2e2e;border:1px solid #6a6a6a;border-radius:2px;color:#ec0c0c;font-size:13px;line-height:19px;text-align:center;letter-spacing:0.3px">SELL LIMIT</div>
<div class="t" style="left:182px;top:165px;width:86px;height:1px;background:#0a9ad8"></div>
<svg class="t" style="position:absolute;left:125px;top:138px" width="50" height="50"><defs><linearGradient id="g1599" x1="0" y1="0" x2="0" y2="1"><stop offset="0" stop-color="#62a010"/><stop offset="1" stop-color="#2a5010"/></linearGradient><linearGradient id="g2599" x1="0" y1="0" x2="0" y2="1"><stop offset="0" stop-color="#d0e0b8"/><stop offset="1" stop-color="#a8b898"/></linearGradient><linearGradient id="g3599" x1="0" y1="0" x2="0" y2="1"><stop offset="0" stop-color="#5aa0c0"/><stop offset="1" stop-color="#4048a8"/></linearGradient></defs><circle cx="25" cy="24.7" r="24.5" fill="url(#g1599)"/><circle cx="25" cy="24.7" r="19.5" fill="url(#g2599)"/><circle cx="25" cy="24.7" r="13.8" fill="url(#g3599)"/><circle cx="25" cy="24.7" r="9" fill="#c8d8e2"/><circle cx="25" cy="24.7" r="5" fill="#e04050"/><circle cx="25" cy="24.7" r="2" fill="#901020"/></svg>
<div class="t" style="left:9px;top:265px;width:116px;height:5px;border:2px solid #0aa0e0;border-bottom:none;border-radius:2px"></div>
<div class="t" style="left:172px;top:265px;width:117px;height:5px;border:2px solid #0aa0e0;border-bottom:none;border-radius:2px"></div>
<div class="t" style="left:11px;top:269px;width:18px;height:18px;background:#2a3038;border:1px solid #505860"></div>
<div class="t" style="left:175px;top:269px;width:18px;height:18px;background:#2a3038;border:1px solid #505860"></div>
<div class="t" style="left:103px;top:269px;width:19px;height:18px;background:#2a3038;border:1px solid #505860"></div>
<svg class="t" style="position:absolute;left:103px;top:269px" width="19" height="18"><path d="M3,14 C6,6 10,16 16,7" stroke="#c0f000" stroke-width="2" fill="none"/></svg>
<div class="t" style="left:267px;top:269px;width:19px;height:18px;background:#2a3038;border:1px solid #505860"></div>
<svg class="t" style="position:absolute;left:267px;top:269px" width="19" height="18"><path d="M3,14 C6,6 10,16 16,7" stroke="#c0f000" stroke-width="2" fill="none"/></svg>
<div class="t" style="left:33px;top:268px;font-size:14px;line-height:18px;color:#fff">Стоплосс</div>
<div class="t" style="left:196px;top:268px;font-size:14px;line-height:18px;color:#fff">Тейкпроф</div>
</div>
<div style="position:absolute;left:531px;top:431px;width:897px;height:21px;background:#f0f0f0"></div>
<div style="position:absolute;left:531px;top:433px;width:282px;height:1px;background:#000"></div>
<div style="position:absolute;left:896px;top:433px;width:532px;height:1px;background:#000"></div>
<div style="position:absolute;left:531px;top:431px;width:1px;height:21px;background:#000"></div>
<div style="position:absolute;left:813px;top:433px;width:83px;height:19px;background:#fff;border:1px solid #000;border-top:none;border-bottom:2px solid #000"></div>
<div style="position:absolute;left:546px;top:436px;white-space:nowrap;font-size:11.5px;line-height:15px;color:#6a6a6a">MESM20,M10</div>
<div style="position:absolute;left:630px;top:438px;width:1px;height:11px;background:#6a6a6a"></div>
<div style="position:absolute;left:642px;top:436px;white-space:nowrap;font-size:11.5px;line-height:15px;color:#6a6a6a">EPM20,M10</div>
<div style="position:absolute;left:715px;top:438px;width:1px;height:11px;background:#6a6a6a"></div>
<div style="position:absolute;left:728px;top:436px;white-space:nowrap;font-size:11.5px;line-height:15px;color:#6a6a6a">MESM20,M10</div>
<div style="position:absolute;left:824px;top:436px;white-space:nowrap;font-size:11.5px;line-height:15px;color:#000">EPM20,M10</div>
<svg style="position:absolute;left:1388px;top:436px" width="36" height="14"><polygon points="9,3 9,10 5,6.5" fill="#909090"/><polygon points="27,3 27,10 31,6.5" fill="#909090"/></svg>
<div style="position:absolute;left:355px;top:452px;width:1073px;height:1px;background:#a8a8a8"></div>
<div style="position:absolute;left:355px;top:453px;width:1073px;height:1px;background:#fcfcfc"></div>
<div style="position:absolute;left:357px;top:455px;white-space:nowrap;font-size:13px;line-height:15px;font-weight:bold;color:#000">×</div>
<div style="position:absolute;left:355px;top:471px;width:14px;height:331px;background:#d0dcea"></div>
<div style="position:absolute;left:355px;top:873px;width:120px;height:14px;transform-origin:0 0;transform:rotate(-90deg);font-size:11px;line-height:14px;color:#000;white-space:nowrap;text-align:right">Инструменты</div>
<div style="position:absolute;left:369px;top:457px;width:1059px;height:345px;background:#fff;border-left:1px solid #a0a0a0;border-top:1px solid #a0a0a0"></div>
<div style="position:absolute;left:376px;top:463px;white-space:nowrap;font-size:12px;line-height:14px">Время</div>
<div style="position:absolute;left:510px;top:463px;white-space:nowrap;font-size:12px;line-height:14px;width:55px;text-align:right">Сделка</div>
<div style="position:absolute;left:571px;top:463px;white-space:nowrap;font-size:12px;line-height:14px;width:55px;text-align:right">Ордер</div>
<div style="position:absolute;left:632px;top:463px;white-space:nowrap;font-size:12px;line-height:14px;width:64px;text-align:right">Символ</div>
<div style="position:absolute;left:702px;top:463px;white-space:nowrap;font-size:12px;line-height:14px;width:46px;text-align:right">Тип</div>
<div style="position:absolute;left:761px;top:463px;white-space:nowrap;font-size:12px;line-height:14px">Направл...</div>
<div style="position:absolute;left:824px;top:463px;white-space:nowrap;font-size:12px;line-height:14px;width:82px;text-align:right">Объем</div>
<div style="position:absolute;left:912px;top:463px;white-space:nowrap;font-size:12px;line-height:14px;width:82px;text-align:right">Цена</div>
<div style="position:absolute;left:1000px;top:463px;white-space:nowrap;font-size:12px;line-height:14px;width:82px;text-align:right">S / L</div>
<div style="position:absolute;left:1088px;top:463px;white-space:nowrap;font-size:12px;line-height:14px;width:82px;text-align:right">T / P</div>
<div style="position:absolute;left:1176px;top:463px;white-space:nowrap;font-size:12px;line-height:14px;width:64px;text-align:right">Комиссия</div>
<div style="position:absolute;left:1246px;top:463px;white-space:nowrap;font-size:12px;line-height:14px;width:64px;text-align:right">Своп</div>
<div style="position:absolute;left:1329px;top:463px;white-space:nowrap;font-size:12px;line-height:14px">Прибыль</div>
<svg style="position:absolute;left:1390px;top:465px" width="12" height="8"><polygon points="1,6.5 10,6.5 5.5,1.5" fill="#303030"/></svg>
<div style="position:absolute;left:370px;top:482px;width:1041px;height:20px;background:#ddeefb;border-bottom:1px solid #d8d8d8"></div>
<div style="position:absolute;left:370px;top:502px;width:1041px;height:20px;background:#ebebeb;border-bottom:1px solid #d8d8d8"></div>
<div style="position:absolute;left:370px;top:522px;width:1041px;height:20px;background:#ffffff;border-bottom:1px solid #d8d8d8"></div>
<div style="position:absolute;left:370px;top:542px;width:1041px;height:20px;background:#ebebeb;border-bottom:1px solid #d8d8d8"></div>
<div style="position:absolute;left:370px;top:562px;width:1041px;height:20px;background:#ffffff;border-bottom:1px solid #d8d8d8"></div>
<div style="position:absolute;left:370px;top:582px;width:1041px;height:20px;background:#ebebeb;border-bottom:1px solid #d8d8d8"></div>
<div style="position:absolute;left:370px;top:602px;width:1041px;height:20px;background:#ffffff;border-bottom:1px solid #d8d8d8"></div>
<div style="position:absolute;left:370px;top:622px;width:1041px;height:20px;background:#ebebeb;border-bottom:1px solid #d8d8d8"></div>
<div style="position:absolute;left:370px;top:642px;width:1041px;height:20px;background:#ffffff;border-bottom:1px solid #d8d8d8"></div>
<div style="position:absolute;left:370px;top:662px;width:1041px;height:20px;background:#ebebeb;border-bottom:1px solid #d8d8d8"></div>
<div style="position:absolute;left:370px;top:682px;width:1041px;height:20px;background:#ffffff;border-bottom:1px solid #d8d8d8"></div>
<div style="position:absolute;left:370px;top:702px;width:1041px;height:20px;background:#ebebeb;border-bottom:1px solid #d8d8d8"></div>
<div style="position:absolute;left:370px;top:722px;width:1041px;height:20px;background:#ffffff;border-bottom:1px solid #d8d8d8"></div>
<div style="position:absolute;left:370px;top:742px;width:1041px;height:20px;background:#ebebeb;border-bottom:1px solid #d8d8d8"></div>
<div style="position:absolute;left:510px;top:458px;width:1px;height:304px;background:#d6d6d6"></div>
<div style="position:absolute;left:571px;top:458px;width:1px;height:304px;background:#d6d6d6"></div>
<div style="position:absolute;left:632px;top:458px;width:1px;height:304px;background:#d6d6d6"></div>
<div style="position:absolute;left:702px;top:458px;width:1px;height:304px;background:#d6d6d6"></div>
<div style="position:absolute;left:754px;top:458px;width:1px;height:304px;background:#d6d6d6"></div>
<div style="position:absolute;left:824px;top:458px;width:1px;height:304px;background:#d6d6d6"></div>
<div style="position:absolute;left:912px;top:458px;width:1px;height:304px;background:#d6d6d6"></div>
<div style="position:absolute;left:1000px;top:458px;width:1px;height:304px;background:#d6d6d6"></div>
<div style="position:absolute;left:1088px;top:458px;width:1px;height:304px;background:#d6d6d6"></div>
<div style="position:absolute;left:1176px;top:458px;width:1px;height:304px;background:#d6d6d6"></div>
<div style="position:absolute;left:1246px;top:458px;width:1px;height:304px;background:#d6d6d6"></div>
<div style="position:absolute;left:1316px;top:458px;width:1px;height:304px;background:#d6d6d6"></div>
<div style="position:absolute;left:391px;top:485px;white-space:nowrap;font-size:12px;line-height:14px;letter-spacing:-0.55px">2020.04.28 10:01:12</div>
<div style="position:absolute;left:510px;top:485px;white-space:nowrap;font-size:12px;line-height:14px;width:57px;text-align:right;letter-spacing:-0.55px">36960220</div>
<div style="position:absolute;left:571px;top:485px;white-space:nowrap;font-size:12px;line-height:14px;width:57px;text-align:right;letter-spacing:-0.55px">51673995</div>
<div style="position:absolute;left:632px;top:485px;white-space:nowrap;font-size:12px;line-height:14px;width:66px;text-align:right;letter-spacing:-0.55px">epm20</div>
<div style="position:absolute;left:702px;top:485px;white-space:nowrap;font-size:12px;line-height:14px;width:48px;text-align:right;letter-spacing:-0.55px">buy</div>
<div style="position:absolute;left:754px;top:485px;white-space:nowrap;font-size:12px;line-height:14px;width:66px;text-align:right;letter-spacing:-0.55px">out</div>
<div style="position:absolute;left:824px;top:485px;white-space:nowrap;font-size:12px;line-height:14px;width:84px;text-align:right;letter-spacing:-0.55px">1.00</div>
<div style="position:absolute;left:912px;top:485px;white-space:nowrap;font-size:12px;line-height:14px;width:84px;text-align:right;letter-spacing:-0.55px">2903.75</div>
<div style="position:absolute;left:1000px;top:485px;white-space:nowrap;font-size:12px;line-height:14px;width:84px;text-align:right;letter-spacing:-0.55px">2906.75</div>
<div style="position:absolute;left:1176px;top:485px;white-space:nowrap;font-size:12px;line-height:14px;width:66px;text-align:right;letter-spacing:-0.55px">-1.85</div>
<div style="position:absolute;left:1316px;top:485px;white-space:nowrap;font-size:12px;line-height:14px;width:91px;text-align:right;letter-spacing:-0.55px">50.00</div>
<svg style="position:absolute;left:372px;top:483px" width="13" height="17"><defs><linearGradient id="dg0" x1="0" y1="0" x2="0" y2="1"><stop offset="0.35" stop-color="#fff"/><stop offset="1" stop-color="#a8cdf4"/></linearGradient></defs><path d="M0.8,2.2 Q0.8,0.8 2.2,0.8 H10.8 Q12.2,0.8 12.2,2.2 V11.5 L8,15.7 H2.2 Q0.8,15.7 0.8,14.3 Z" fill="url(#dg0)" stroke="#1a88d0" stroke-width="1.5"/><path d="M12.2,11.5 L8,15.7 V12.5 Q8,11.5 9,11.5 Z" fill="#1a88d0"/><path d="M5,4.8 H10.5" stroke="#2a50c0" stroke-width="1.8"/><polygon points="2.5,4.8 6,1.8 6,7.8" fill="#2a50c0"/></svg>
<div style="position:absolute;left:391px;top:505px;white-space:nowrap;font-size:12px;line-height:14px;letter-spacing:-0.55px">2020.04.28 10:02:32</div>
<div style="position:absolute;left:510px;top:505px;white-space:nowrap;font-size:12px;line-height:14px;width:57px;text-align:right;letter-spacing:-0.55px">36960313</div>
<div style="position:absolute;left:571px;top:505px;white-space:nowrap;font-size:12px;line-height:14px;width:57px;text-align:right;letter-spacing:-0.55px">51674153</div>
<div style="position:absolute;left:632px;top:505px;white-space:nowrap;font-size:12px;line-height:14px;width:66px;text-align:right;letter-spacing:-0.55px">epm20</div>
<div style="position:absolute;left:702px;top:505px;white-space:nowrap;font-size:12px;line-height:14px;width:48px;text-align:right;letter-spacing:-0.55px">sell</div>
<div style="position:absolute;left:754px;top:505px;white-space:nowrap;font-size:12px;line-height:14px;width:66px;text-align:right;letter-spacing:-0.55px">out</div>
<div style="position:absolute;left:824px;top:505px;white-space:nowrap;font-size:12px;line-height:14px;width:84px;text-align:right;letter-spacing:-0.55px">1.00</div>
<div style="position:absolute;left:912px;top:505px;white-space:nowrap;font-size:12px;line-height:14px;width:84px;text-align:right;letter-spacing:-0.55px">2905.75</div>
<div style="position:absolute;left:1000px;top:505px;white-space:nowrap;font-size:12px;line-height:14px;width:84px;text-align:right;letter-spacing:-0.55px">2902.75</div>
<div style="position:absolute;left:1176px;top:505px;white-space:nowrap;font-size:12px;line-height:14px;width:66px;text-align:right;letter-spacing:-0.55px">-1.85</div>
<div style="position:absolute;left:1316px;top:505px;white-space:nowrap;font-size:12px;line-height:14px;width:91px;text-align:right;letter-spacing:-0.55px">50.00</div>
<svg style="position:absolute;left:372px;top:503px" width="13" height="17"><defs><linearGradient id="dg1" x1="0" y1="0" x2="0" y2="1"><stop offset="0.35" stop-color="#fff"/><stop offset="1" stop-color="#f8c0a8"/></linearGradient></defs><path d="M0.8,2.2 Q0.8,0.8 2.2,0.8 H10.8 Q12.2,0.8 12.2,2.2 V11.5 L8,15.7 H2.2 Q0.8,15.7 0.8,14.3 Z" fill="url(#dg1)" stroke="#e8501a" stroke-width="1.5"/><path d="M12.2,11.5 L8,15.7 V12.5 Q8,11.5 9,11.5 Z" fill="#e8501a"/><path d="M5,4.8 H10.5" stroke="#d83010" stroke-width="1.8"/><polygon points="2.5,4.8 6,1.8 6,7.8" fill="#d83010"/></svg>
<div style="position:absolute;left:391px;top:525px;white-space:nowrap;font-size:12px;line-height:14px;letter-spacing:-0.55px">2020.04.28 09:39:10</div>
<div style="position:absolute;left:510px;top:525px;white-space:nowrap;font-size:12px;line-height:14px;width:57px;text-align:right;letter-spacing:-0.55px">36958952</div>
<div style="position:absolute;left:571px;top:525px;white-space:nowrap;font-size:12px;line-height:14px;width:57px;text-align:right;letter-spacing:-0.55px">51671980</div>
<div style="position:absolute;left:632px;top:525px;white-space:nowrap;font-size:12px;line-height:14px;width:66px;text-align:right;letter-spacing:-0.55px">epm20</div>
<div style="position:absolute;left:702px;top:525px;white-space:nowrap;font-size:12px;line-height:14px;width:48px;text-align:right;letter-spacing:-0.55px">sell</div>
<div style="position:absolute;left:754px;top:525px;white-space:nowrap;font-size:12px;line-height:14px;width:66px;text-align:right;letter-spacing:-0.55px">out</div>
<div style="position:absolute;left:824px;top:525px;white-space:nowrap;font-size:12px;line-height:14px;width:84px;text-align:right;letter-spacing:-0.55px">1.00</div>
<div style="position:absolute;left:912px;top:525px;white-space:nowrap;font-size:12px;line-height:14px;width:84px;text-align:right;letter-spacing:-0.55px">2898.50</div>
<div style="position:absolute;left:1000px;top:525px;white-space:nowrap;font-size:12px;line-height:14px;width:84px;text-align:right;letter-spacing:-0.55px">2895.25</div>
<div style="position:absolute;left:1176px;top:525px;white-space:nowrap;font-size:12px;line-height:14px;width:66px;text-align:right;letter-spacing:-0.55px">-1.85</div>
<div style="position:absolute;left:1316px;top:525px;white-space:nowrap;font-size:12px;line-height:14px;width:91px;text-align:right;letter-spacing:-0.55px">62.50</div>
<svg style="position:absolute;left:372px;top:523px" width="13" height="17"><defs><linearGradient id="dg2" x1="0" y1="0" x2="0" y2="1"><stop offset="0.35" stop-color="#fff"/><stop offset="1" stop-color="#f8c0a8"/></linearGradient></defs><path d="M0.8,2.2 Q0.8,0.8 2.2,0.8 H10.8 Q12.2,0.8 12.2,2.2 V11.5 L8,15.7 H2.2 Q0.8,15.7 0.8,14.3 Z" fill="url(#dg2)" stroke="#e8501a" stroke-width="1.5"/><path d="M12.2,11.5 L8,15.7 V12.5 Q8,11.5 9,11.5 Z" fill="#e8501a"/><path d="M5,4.8 H10.5" stroke="#d83010" stroke-width="1.8"/><polygon points="2.5,4.8 6,1.8 6,7.8" fill="#d83010"/></svg>
<div style="position:absolute;left:391px;top:545px;white-space:nowrap;font-size:12px;line-height:14px;letter-spacing:-0.55px">2020.04.28 09:42:51</div>
<div style="position:absolute;left:510px;top:545px;white-space:nowrap;font-size:12px;line-height:14px;width:57px;text-align:right;letter-spacing:-0.55px">36959147</div>
<div style="position:absolute;left:571px;top:545px;white-space:nowrap;font-size:12px;line-height:14px;width:57px;text-align:right;letter-spacing:-0.55px">51672255</div>
<div style="position:absolute;left:632px;top:545px;white-space:nowrap;font-size:12px;line-height:14px;width:66px;text-align:right;letter-spacing:-0.55px">epm20</div>
<div style="position:absolute;left:702px;top:545px;white-space:nowrap;font-size:12px;line-height:14px;width:48px;text-align:right;letter-spacing:-0.55px">buy</div>
<div style="position:absolute;left:754px;top:545px;white-space:nowrap;font-size:12px;line-height:14px;width:66px;text-align:right;letter-spacing:-0.55px">out</div>
<div style="position:absolute;left:824px;top:545px;white-space:nowrap;font-size:12px;line-height:14px;width:84px;text-align:right;letter-spacing:-0.55px">1.00</div>
<div style="position:absolute;left:912px;top:545px;white-space:nowrap;font-size:12px;line-height:14px;width:84px;text-align:right;letter-spacing:-0.55px">2897.75</div>
<div style="position:absolute;left:1000px;top:545px;white-space:nowrap;font-size:12px;line-height:14px;width:84px;text-align:right;letter-spacing:-0.55px">2900.75</div>
<div style="position:absolute;left:1176px;top:545px;white-space:nowrap;font-size:12px;line-height:14px;width:66px;text-align:right;letter-spacing:-0.55px">-1.85</div>
<div style="position:absolute;left:1316px;top:545px;white-space:nowrap;font-size:12px;line-height:14px;width:91px;text-align:right;letter-spacing:-0.55px">62.50</div>
<svg style="position:absolute;left:372px;top:543px" width="13" height="17"><defs><linearGradient id="dg3" x1="0" y1="0" x2="0" y2="1"><stop offset="0.35" stop-color="#fff"/><stop offset="1" stop-color="#a8cdf4"/></linearGradient></defs><path d="M0.8,2.2 Q0.8,0.8 2.2,0.8 H10.8 Q12.2,0.8 12.2,2.2 V11.5 L8,15.7 H2.2 Q0.8,15.7 0.8,14.3 Z" fill="url(#dg3)" stroke="#1a88d0" stroke-width="1.5"/><path d="M12.2,11.5 L8,15.7 V12.5 Q8,11.5 9,11.5 Z" fill="#1a88d0"/><path d="M5,4.8 H10.5" stroke="#2a50c0" stroke-width="1.8"/><polygon points="2.5,4.8 6,1.8 6,7.8" fill="#2a50c0"/></svg>
<div style="position:absolute;left:391px;top:565px;white-space:nowrap;font-size:12px;line-height:14px;letter-spacing:-0.55px">2020.04.28 10:41:19</div>
<div style="position:absolute;left:510px;top:565px;white-space:nowrap;font-size:12px;line-height:14px;width:57px;text-align:right;letter-spacing:-0.55px">36961983</div>
<div style="position:absolute;left:571px;top:565px;white-space:nowrap;font-size:12px;line-height:14px;width:57px;text-align:right;letter-spacing:-0.55px">51677661</div>
<div style="position:absolute;left:632px;top:565px;white-space:nowrap;font-size:12px;line-height:14px;width:66px;text-align:right;letter-spacing:-0.55px">epm20</div>
<div style="position:absolute;left:702px;top:565px;white-space:nowrap;font-size:12px;line-height:14px;width:48px;text-align:right;letter-spacing:-0.55px">sell</div>
<div style="position:absolute;left:754px;top:565px;white-space:nowrap;font-size:12px;line-height:14px;width:66px;text-align:right;letter-spacing:-0.55px">out</div>
<div style="position:absolute;left:824px;top:565px;white-space:nowrap;font-size:12px;line-height:14px;width:84px;text-align:right;letter-spacing:-0.55px">1.00</div>
<div style="position:absolute;left:912px;top:565px;white-space:nowrap;font-size:12px;line-height:14px;width:84px;text-align:right;letter-spacing:-0.55px">2905.50</div>
<div style="position:absolute;left:1000px;top:565px;white-space:nowrap;font-size:12px;line-height:14px;width:84px;text-align:right;letter-spacing:-0.55px">2902.25</div>
<div style="position:absolute;left:1176px;top:565px;white-space:nowrap;font-size:12px;line-height:14px;width:66px;text-align:right;letter-spacing:-0.55px">-1.85</div>
<div style="position:absolute;left:1316px;top:565px;white-space:nowrap;font-size:12px;line-height:14px;width:91px;text-align:right;letter-spacing:-0.55px">62.50</div>
<svg style="position:absolute;left:372px;top:563px" width="13" height="17"><defs><linearGradient id="dg4" x1="0" y1="0" x2="0" y2="1"><stop offset="0.35" stop-color="#fff"/><stop offset="1" stop-color="#f8c0a8"/></linearGradient></defs><path d="M0.8,2.2 Q0.8,0.8 2.2,0.8 H10.8 Q12.2,0.8 12.2,2.2 V11.5 L8,15.7 H2.2 Q0.8,15.7 0.8,14.3 Z" fill="url(#dg4)" stroke="#e8501a" stroke-width="1.5"/><path d="M12.2,11.5 L8,15.7 V12.5 Q8,11.5 9,11.5 Z" fill="#e8501a"/><path d="M5,4.8 H10.5" stroke="#d83010" stroke-width="1.8"/><polygon points="2.5,4.8 6,1.8 6,7.8" fill="#d83010"/></svg>
<div style="position:absolute;left:391px;top:585px;white-space:nowrap;font-size:12px;line-height:14px;letter-spacing:-0.55px">2020.04.28 10:49:18</div>
<div style="position:absolute;left:510px;top:585px;white-space:nowrap;font-size:12px;line-height:14px;width:57px;text-align:right;letter-spacing:-0.55px">36962352</div>
<div style="position:absolute;left:571px;top:585px;white-space:nowrap;font-size:12px;line-height:14px;width:57px;text-align:right;letter-spacing:-0.55px">51678463</div>
<div style="position:absolute;left:632px;top:585px;white-space:nowrap;font-size:12px;line-height:14px;width:66px;text-align:right;letter-spacing:-0.55px">epm20</div>
<div style="position:absolute;left:702px;top:585px;white-space:nowrap;font-size:12px;line-height:14px;width:48px;text-align:right;letter-spacing:-0.55px">buy</div>
<div style="position:absolute;left:754px;top:585px;white-space:nowrap;font-size:12px;line-height:14px;width:66px;text-align:right;letter-spacing:-0.55px">out</div>
<div style="position:absolute;left:824px;top:585px;white-space:nowrap;font-size:12px;line-height:14px;width:84px;text-align:right;letter-spacing:-0.55px">1.00</div>
<div style="position:absolute;left:912px;top:585px;white-space:nowrap;font-size:12px;line-height:14px;width:84px;text-align:right;letter-spacing:-0.55px">2902.50</div>
<div style="position:absolute;left:1000px;top:585px;white-space:nowrap;font-size:12px;line-height:14px;width:84px;text-align:right;letter-spacing:-0.55px">2905.75</div>
<div style="position:absolute;left:1176px;top:585px;white-space:nowrap;font-size:12px;line-height:14px;width:66px;text-align:right;letter-spacing:-0.55px">-1.85</div>
<div style="position:absolute;left:1316px;top:585px;white-space:nowrap;font-size:12px;line-height:14px;width:91px;text-align:right;letter-spacing:-0.55px">62.50</div>
<svg style="position:absolute;left:372px;top:583px" width="13" height="17"><defs><linearGradient id="dg5" x1="0" y1="0" x2="0" y2="1"><stop offset="0.35" stop-color="#fff"/><stop offset="1" stop-color="#a8cdf4"/></linearGradient></defs><path d="M0.8,2.2 Q0.8,0.8 2.2,0.8 H10.8 Q12.2,0.8 12.2,2.2 V11.5 L8,15.7 H2.2 Q0.8,15.7 0.8,14.3 Z" fill="url(#dg5)" stroke="#1a88d0" stroke-width="1.5"/><path d="M12.2,11.5 L8,15.7 V12.5 Q8,11.5 9,11.5 Z" fill="#1a88d0"/><path d="M5,4.8 H10.5" stroke="#2a50c0" stroke-width="1.8"/><polygon points="2.5,4.8 6,1.8 6,7.8" fill="#2a50c0"/></svg>
<div style="position:absolute;left:391px;top:605px;white-space:nowrap;font-size:12px;line-height:14px;letter-spacing:-0.55px">2020.04.28 11:02:52</div>
<div style="position:absolute;left:510px;top:605px;white-space:nowrap;font-size:12px;line-height:14px;width:57px;text-align:right;letter-spacing:-0.55px">36962857</div>
<div style="position:absolute;left:571px;top:605px;white-space:nowrap;font-size:12px;line-height:14px;width:57px;text-align:right;letter-spacing:-0.55px">51679350</div>
<div style="position:absolute;left:632px;top:605px;white-space:nowrap;font-size:12px;line-height:14px;width:66px;text-align:right;letter-spacing:-0.55px">epm20</div>
<div style="position:absolute;left:702px;top:605px;white-space:nowrap;font-size:12px;line-height:14px;width:48px;text-align:right;letter-spacing:-0.55px">buy</div>
<div style="position:absolute;left:754px;top:605px;white-space:nowrap;font-size:12px;line-height:14px;width:66px;text-align:right;letter-spacing:-0.55px">out</div>
<div style="position:absolute;left:824px;top:605px;white-space:nowrap;font-size:12px;line-height:14px;width:84px;text-align:right;letter-spacing:-0.55px">1.00</div>
<div style="position:absolute;left:912px;top:605px;white-space:nowrap;font-size:12px;line-height:14px;width:84px;text-align:right;letter-spacing:-0.55px">2898.75</div>
<div style="position:absolute;left:1000px;top:605px;white-space:nowrap;font-size:12px;line-height:14px;width:84px;text-align:right;letter-spacing:-0.55px">2902.00</div>
<div style="position:absolute;left:1176px;top:605px;white-space:nowrap;font-size:12px;line-height:14px;width:66px;text-align:right;letter-spacing:-0.55px">-1.85</div>
<div style="position:absolute;left:1316px;top:605px;white-space:nowrap;font-size:12px;line-height:14px;width:91px;text-align:right;letter-spacing:-0.55px">62.50</div>
<svg style="position:absolute;left:372px;top:603px" width="13" height="17"><defs><linearGradient id="dg6" x1="0" y1="0" x2="0" y2="1"><stop offset="0.35" stop-color="#fff"/><stop offset="1" stop-color="#a8cdf4"/></linearGradient></defs><path d="M0.8,2.2 Q0.8,0.8 2.2,0.8 H10.8 Q12.2,0.8 12.2,2.2 V11.5 L8,15.7 H2.2 Q0.8,15.7 0.8,14.3 Z" fill="url(#dg6)" stroke="#1a88d0" stroke-width="1.5"/><path d="M12.2,11.5 L8,15.7 V12.5 Q8,11.5 9,11.5 Z" fill="#1a88d0"/><path d="M5,4.8 H10.5" stroke="#2a50c0" stroke-width="1.8"/><polygon points="2.5,4.8 6,1.8 6,7.8" fill="#2a50c0"/></svg>
<div style="position:absolute;left:391px;top:625px;white-space:nowrap;font-size:12px;line-height:14px;letter-spacing:-0.55px">2020.04.28 09:14:36</div>
<div style="position:absolute;left:510px;top:625px;white-space:nowrap;font-size:12px;line-height:14px;width:57px;text-align:right;letter-spacing:-0.55px">36956949</div>
<div style="position:absolute;left:571px;top:625px;white-space:nowrap;font-size:12px;line-height:14px;width:57px;text-align:right;letter-spacing:-0.55px">51669012</div>
<div style="position:absolute;left:632px;top:625px;white-space:nowrap;font-size:12px;line-height:14px;width:66px;text-align:right;letter-spacing:-0.55px">epm20</div>
<div style="position:absolute;left:702px;top:625px;white-space:nowrap;font-size:12px;line-height:14px;width:48px;text-align:right;letter-spacing:-0.55px">sell</div>
<div style="position:absolute;left:754px;top:625px;white-space:nowrap;font-size:12px;line-height:14px;width:66px;text-align:right;letter-spacing:-0.55px">out</div>
<div style="position:absolute;left:824px;top:625px;white-space:nowrap;font-size:12px;line-height:14px;width:84px;text-align:right;letter-spacing:-0.55px">1.00</div>
<div style="position:absolute;left:912px;top:625px;white-space:nowrap;font-size:12px;line-height:14px;width:84px;text-align:right;letter-spacing:-0.55px">2881.25</div>
<div style="position:absolute;left:1000px;top:625px;white-space:nowrap;font-size:12px;line-height:14px;width:84px;text-align:right;letter-spacing:-0.55px">2877.75</div>
<div style="position:absolute;left:1176px;top:625px;white-space:nowrap;font-size:12px;line-height:14px;width:66px;text-align:right;letter-spacing:-0.55px">-1.85</div>
<div style="position:absolute;left:1316px;top:625px;white-space:nowrap;font-size:12px;line-height:14px;width:91px;text-align:right;letter-spacing:-0.55px">75.00</div>
<svg style="position:absolute;left:372px;top:623px" width="13" height="17"><defs><linearGradient id="dg7" x1="0" y1="0" x2="0" y2="1"><stop offset="0.35" stop-color="#fff"/><stop offset="1" stop-color="#f8c0a8"/></linearGradient></defs><path d="M0.8,2.2 Q0.8,0.8 2.2,0.8 H10.8 Q12.2,0.8 12.2,2.2 V11.5 L8,15.7 H2.2 Q0.8,15.7 0.8,14.3 Z" fill="url(#dg7)" stroke="#e8501a" stroke-width="1.5"/><path d="M12.2,11.5 L8,15.7 V12.5 Q8,11.5 9,11.5 Z" fill="#e8501a"/><path d="M5,4.8 H10.5" stroke="#d83010" stroke-width="1.8"/><polygon points="2.5,4.8 6,1.8 6,7.8" fill="#d83010"/></svg>
<div style="position:absolute;left:391px;top:645px;white-space:nowrap;font-size:12px;line-height:14px;letter-spacing:-0.55px">2020.04.28 09:19:17</div>
<div style="position:absolute;left:510px;top:645px;white-space:nowrap;font-size:12px;line-height:14px;width:57px;text-align:right;letter-spacing:-0.55px">36957303</div>
<div style="position:absolute;left:571px;top:645px;white-space:nowrap;font-size:12px;line-height:14px;width:57px;text-align:right;letter-spacing:-0.55px">51669454</div>
<div style="position:absolute;left:632px;top:645px;white-space:nowrap;font-size:12px;line-height:14px;width:66px;text-align:right;letter-spacing:-0.55px">epm20</div>
<div style="position:absolute;left:702px;top:645px;white-space:nowrap;font-size:12px;line-height:14px;width:48px;text-align:right;letter-spacing:-0.55px">sell</div>
<div style="position:absolute;left:754px;top:645px;white-space:nowrap;font-size:12px;line-height:14px;width:66px;text-align:right;letter-spacing:-0.55px">out</div>
<div style="position:absolute;left:824px;top:645px;white-space:nowrap;font-size:12px;line-height:14px;width:84px;text-align:right;letter-spacing:-0.55px">1.00</div>
<div style="position:absolute;left:912px;top:645px;white-space:nowrap;font-size:12px;line-height:14px;width:84px;text-align:right;letter-spacing:-0.55px">2886.50</div>
<div style="position:absolute;left:1000px;top:645px;white-space:nowrap;font-size:12px;line-height:14px;width:84px;text-align:right;letter-spacing:-0.55px">2883.00</div>
<div style="position:absolute;left:1176px;top:645px;white-space:nowrap;font-size:12px;line-height:14px;width:66px;text-align:right;letter-spacing:-0.55px">-1.85</div>
<div style="position:absolute;left:1316px;top:645px;white-space:nowrap;font-size:12px;line-height:14px;width:91px;text-align:right;letter-spacing:-0.55px">75.00</div>
<svg style="position:absolute;left:372px;top:643px" width="13" height="17"><defs><linearGradient id="dg8" x1="0" y1="0" x2="0" y2="1"><stop offset="0.35" stop-color="#fff"/><stop offset="1" stop-color="#f8c0a8"/></linearGradient></defs><path d="M0.8,2.2 Q0.8,0.8 2.2,0.8 H10.8 Q12.2,0.8 12.2,2.2 V11.5 L8,15.7 H2.2 Q0.8,15.7 0.8,14.3 Z" fill="url(#dg8)" stroke="#e8501a" stroke-width="1.5"/><path d="M12.2,11.5 L8,15.7 V12.5 Q8,11.5 9,11.5 Z" fill="#e8501a"/><path d="M5,4.8 H10.5" stroke="#d83010" stroke-width="1.8"/><polygon points="2.5,4.8 6,1.8 6,7.8" fill="#d83010"/></svg>
<div style="position:absolute;left:391px;top:665px;white-space:nowrap;font-size:12px;line-height:14px;letter-spacing:-0.55px">2020.04.28 09:45:41</div>
<div style="position:absolute;left:510px;top:665px;white-space:nowrap;font-size:12px;line-height:14px;width:57px;text-align:right;letter-spacing:-0.55px">36959236</div>
<div style="position:absolute;left:571px;top:665px;white-space:nowrap;font-size:12px;line-height:14px;width:57px;text-align:right;letter-spacing:-0.55px">51672350</div>
<div style="position:absolute;left:632px;top:665px;white-space:nowrap;font-size:12px;line-height:14px;width:66px;text-align:right;letter-spacing:-0.55px">epm20</div>
<div style="position:absolute;left:702px;top:665px;white-space:nowrap;font-size:12px;line-height:14px;width:48px;text-align:right;letter-spacing:-0.55px">buy</div>
<div style="position:absolute;left:754px;top:665px;white-space:nowrap;font-size:12px;line-height:14px;width:66px;text-align:right;letter-spacing:-0.55px">out</div>
<div style="position:absolute;left:824px;top:665px;white-space:nowrap;font-size:12px;line-height:14px;width:84px;text-align:right;letter-spacing:-0.55px">1.00</div>
<div style="position:absolute;left:912px;top:665px;white-space:nowrap;font-size:12px;line-height:14px;width:84px;text-align:right;letter-spacing:-0.55px">2896.00</div>
<div style="position:absolute;left:1000px;top:665px;white-space:nowrap;font-size:12px;line-height:14px;width:84px;text-align:right;letter-spacing:-0.55px">2899.50</div>
<div style="position:absolute;left:1176px;top:665px;white-space:nowrap;font-size:12px;line-height:14px;width:66px;text-align:right;letter-spacing:-0.55px">-1.85</div>
<div style="position:absolute;left:1316px;top:665px;white-space:nowrap;font-size:12px;line-height:14px;width:91px;text-align:right;letter-spacing:-0.55px">75.00</div>
<svg style="position:absolute;left:372px;top:663px" width="13" height="17"><defs><linearGradient id="dg9" x1="0" y1="0" x2="0" y2="1"><stop offset="0.35" stop-color="#fff"/><stop offset="1" stop-color="#a8cdf4"/></linearGradient></defs><path d="M0.8,2.2 Q0.8,0.8 2.2,0.8 H10.8 Q12.2,0.8 12.2,2.2 V11.5 L8,15.7 H2.2 Q0.8,15.7 0.8,14.3 Z" fill="url(#dg9)" stroke="#1a88d0" stroke-width="1.5"/><path d="M12.2,11.5 L8,15.7 V12.5 Q8,11.5 9,11.5 Z" fill="#1a88d0"/><path d="M5,4.8 H10.5" stroke="#2a50c0" stroke-width="1.8"/><polygon points="2.5,4.8 6,1.8 6,7.8" fill="#2a50c0"/></svg>
<div style="position:absolute;left:391px;top:685px;white-space:nowrap;font-size:12px;line-height:14px;letter-spacing:-0.55px">2020.04.28 10:03:54</div>
<div style="position:absolute;left:510px;top:685px;white-space:nowrap;font-size:12px;line-height:14px;width:57px;text-align:right;letter-spacing:-0.55px">36960391</div>
<div style="position:absolute;left:571px;top:685px;white-space:nowrap;font-size:12px;line-height:14px;width:57px;text-align:right;letter-spacing:-0.55px">51674405</div>
<div style="position:absolute;left:632px;top:685px;white-space:nowrap;font-size:12px;line-height:14px;width:66px;text-align:right;letter-spacing:-0.55px">epm20</div>
<div style="position:absolute;left:702px;top:685px;white-space:nowrap;font-size:12px;line-height:14px;width:48px;text-align:right;letter-spacing:-0.55px">buy</div>
<div style="position:absolute;left:754px;top:685px;white-space:nowrap;font-size:12px;line-height:14px;width:66px;text-align:right;letter-spacing:-0.55px">out</div>
<div style="position:absolute;left:824px;top:685px;white-space:nowrap;font-size:12px;line-height:14px;width:84px;text-align:right;letter-spacing:-0.55px">1.00</div>
<div style="position:absolute;left:912px;top:685px;white-space:nowrap;font-size:12px;line-height:14px;width:84px;text-align:right;letter-spacing:-0.55px">2902.75</div>
<div style="position:absolute;left:1000px;top:685px;white-space:nowrap;font-size:12px;line-height:14px;width:84px;text-align:right;letter-spacing:-0.55px">2906.25</div>
<div style="position:absolute;left:1176px;top:685px;white-space:nowrap;font-size:12px;line-height:14px;width:66px;text-align:right;letter-spacing:-0.55px">-1.85</div>
<div style="position:absolute;left:1316px;top:685px;white-space:nowrap;font-size:12px;line-height:14px;width:91px;text-align:right;letter-spacing:-0.55px">75.00</div>
<svg style="position:absolute;left:372px;top:683px" width="13" height="17"><defs><linearGradient id="dg10" x1="0" y1="0" x2="0" y2="1"><stop offset="0.35" stop-color="#fff"/><stop offset="1" stop-color="#a8cdf4"/></linearGradient></defs><path d="M0.8,2.2 Q0.8,0.8 2.2,0.8 H10.8 Q12.2,0.8 12.2,2.2 V11.5 L8,15.7 H2.2 Q0.8,15.7 0.8,14.3 Z" fill="url(#dg10)" stroke="#1a88d0" stroke-width="1.5"/><path d="M12.2,11.5 L8,15.7 V12.5 Q8,11.5 9,11.5 Z" fill="#1a88d0"/><path d="M5,4.8 H10.5" stroke="#2a50c0" stroke-width="1.8"/><polygon points="2.5,4.8 6,1.8 6,7.8" fill="#2a50c0"/></svg>
<div style="position:absolute;left:391px;top:705px;white-space:nowrap;font-size:12px;line-height:14px;letter-spacing:-0.55px">2020.04.28 10:55:00</div>
<div style="position:absolute;left:510px;top:705px;white-space:nowrap;font-size:12px;line-height:14px;width:57px;text-align:right;letter-spacing:-0.55px">36962528</div>
<div style="position:absolute;left:571px;top:705px;white-space:nowrap;font-size:12px;line-height:14px;width:57px;text-align:right;letter-spacing:-0.55px">51678567</div>
<div style="position:absolute;left:632px;top:705px;white-space:nowrap;font-size:12px;line-height:14px;width:66px;text-align:right;letter-spacing:-0.55px">epm20</div>
<div style="position:absolute;left:702px;top:705px;white-space:nowrap;font-size:12px;line-height:14px;width:48px;text-align:right;letter-spacing:-0.55px">buy</div>
<div style="position:absolute;left:754px;top:705px;white-space:nowrap;font-size:12px;line-height:14px;width:66px;text-align:right;letter-spacing:-0.55px">out</div>
<div style="position:absolute;left:824px;top:705px;white-space:nowrap;font-size:12px;line-height:14px;width:84px;text-align:right;letter-spacing:-0.55px">1.00</div>
<div style="position:absolute;left:912px;top:705px;white-space:nowrap;font-size:12px;line-height:14px;width:84px;text-align:right;letter-spacing:-0.55px">2900.75</div>
<div style="position:absolute;left:1000px;top:705px;white-space:nowrap;font-size:12px;line-height:14px;width:84px;text-align:right;letter-spacing:-0.55px">2904.25</div>
<div style="position:absolute;left:1176px;top:705px;white-space:nowrap;font-size:12px;line-height:14px;width:66px;text-align:right;letter-spacing:-0.55px">-1.85</div>
<div style="position:absolute;left:1316px;top:705px;white-space:nowrap;font-size:12px;line-height:14px;width:91px;text-align:right;letter-spacing:-0.55px">75.00</div>
<svg style="position:absolute;left:372px;top:703px" width="13" height="17"><defs><linearGradient id="dg11" x1="0" y1="0" x2="0" y2="1"><stop offset="0.35" stop-color="#fff"/><stop offset="1" stop-color="#a8cdf4"/></linearGradient></defs><path d="M0.8,2.2 Q0.8,0.8 2.2,0.8 H10.8 Q12.2,0.8 12.2,2.2 V11.5 L8,15.7 H2.2 Q0.8,15.7 0.8,14.3 Z" fill="url(#dg11)" stroke="#1a88d0" stroke-width="1.5"/><path d="M12.2,11.5 L8,15.7 V12.5 Q8,11.5 9,11.5 Z" fill="#1a88d0"/><path d="M5,4.8 H10.5" stroke="#2a50c0" stroke-width="1.8"/><polygon points="2.5,4.8 6,1.8 6,7.8" fill="#2a50c0"/></svg>
<div style="position:absolute;left:391px;top:725px;white-space:nowrap;font-size:12px;line-height:14px;letter-spacing:-0.55px">2020.04.28 09:40:16</div>
<div style="position:absolute;left:510px;top:725px;white-space:nowrap;font-size:12px;line-height:14px;width:57px;text-align:right;letter-spacing:-0.55px">36959003</div>
<div style="position:absolute;left:571px;top:725px;white-space:nowrap;font-size:12px;line-height:14px;width:57px;text-align:right;letter-spacing:-0.55px">51672030</div>
<div style="position:absolute;left:632px;top:725px;white-space:nowrap;font-size:12px;line-height:14px;width:66px;text-align:right;letter-spacing:-0.55px">epm20</div>
<div style="position:absolute;left:702px;top:725px;white-space:nowrap;font-size:12px;line-height:14px;width:48px;text-align:right;letter-spacing:-0.55px">sell</div>
<div style="position:absolute;left:754px;top:725px;white-space:nowrap;font-size:12px;line-height:14px;width:66px;text-align:right;letter-spacing:-0.55px">out</div>
<div style="position:absolute;left:824px;top:725px;white-space:nowrap;font-size:12px;line-height:14px;width:84px;text-align:right;letter-spacing:-0.55px">1.00</div>
<div style="position:absolute;left:912px;top:725px;white-space:nowrap;font-size:12px;line-height:14px;width:84px;text-align:right;letter-spacing:-0.55px">2899.50</div>
<div style="position:absolute;left:1000px;top:725px;white-space:nowrap;font-size:12px;line-height:14px;width:84px;text-align:right;letter-spacing:-0.55px">2895.75</div>
<div style="position:absolute;left:1176px;top:725px;white-space:nowrap;font-size:12px;line-height:14px;width:66px;text-align:right;letter-spacing:-0.55px">-1.85</div>
<div style="position:absolute;left:1316px;top:725px;white-space:nowrap;font-size:12px;line-height:14px;width:91px;text-align:right;letter-spacing:-0.55px">87.50</div>
<svg style="position:absolute;left:372px;top:723px" width="13" height="17"><defs><linearGradient id="dg12" x1="0" y1="0" x2="0" y2="1"><stop offset="0.35" stop-color="#fff"/><stop offset="1" stop-color="#f8c0a8"/></linearGradient></defs><path d="M0.8,2.2 Q0.8,0.8 2.2,0.8 H10.8 Q12.2,0.8 12.2,2.2 V11.5 L8,15.7 H2.2 Q0.8,15.7 0.8,14.3 Z" fill="url(#dg12)" stroke="#e8501a" stroke-width="1.5"/><path d="M12.2,11.5 L8,15.7 V12.5 Q8,11.5 9,11.5 Z" fill="#e8501a"/><path d="M5,4.8 H10.5" stroke="#d83010" stroke-width="1.8"/><polygon points="2.5,4.8 6,1.8 6,7.8" fill="#d83010"/></svg>
<div style="position:absolute;left:391px;top:745px;white-space:nowrap;font-size:12px;line-height:14px;letter-spacing:-0.55px">2020.04.28 11:00:43</div>
<div style="position:absolute;left:510px;top:745px;white-space:nowrap;font-size:12px;line-height:14px;width:57px;text-align:right;letter-spacing:-0.55px">36962727</div>
<div style="position:absolute;left:571px;top:745px;white-space:nowrap;font-size:12px;line-height:14px;width:57px;text-align:right;letter-spacing:-0.55px">51678975</div>
<div style="position:absolute;left:632px;top:745px;white-space:nowrap;font-size:12px;line-height:14px;width:66px;text-align:right;letter-spacing:-0.55px">epm20</div>
<div style="position:absolute;left:702px;top:745px;white-space:nowrap;font-size:12px;line-height:14px;width:48px;text-align:right;letter-spacing:-0.55px">buy</div>
<div style="position:absolute;left:754px;top:745px;white-space:nowrap;font-size:12px;line-height:14px;width:66px;text-align:right;letter-spacing:-0.55px">out</div>
<div style="position:absolute;left:824px;top:745px;white-space:nowrap;font-size:12px;line-height:14px;width:84px;text-align:right;letter-spacing:-0.55px">1.00</div>
<div style="position:absolute;left:912px;top:745px;white-space:nowrap;font-size:12px;line-height:14px;width:84px;text-align:right;letter-spacing:-0.55px">2899.25</div>
<div style="position:absolute;left:1000px;top:745px;white-space:nowrap;font-size:12px;line-height:14px;width:84px;text-align:right;letter-spacing:-0.55px">2903.00</div>
<div style="position:absolute;left:1176px;top:745px;white-space:nowrap;font-size:12px;line-height:14px;width:66px;text-align:right;letter-spacing:-0.55px">-1.85</div>
<div style="position:absolute;left:1316px;top:745px;white-space:nowrap;font-size:12px;line-height:14px;width:91px;text-align:right;letter-spacing:-0.55px">87.50</div>
<svg style="position:absolute;left:372px;top:743px" width="13" height="17"><defs><linearGradient id="dg13" x1="0" y1="0" x2="0" y2="1"><stop offset="0.35" stop-color="#fff"/><stop offset="1" stop-color="#a8cdf4"/></linearGradient></defs><path d="M0.8,2.2 Q0.8,0.8 2.2,0.8 H10.8 Q12.2,0.8 12.2,2.2 V11.5 L8,15.7 H2.2 Q0.8,15.7 0.8,14.3 Z" fill="url(#dg13)" stroke="#1a88d0" stroke-width="1.5"/><path d="M12.2,11.5 L8,15.7 V12.5 Q8,11.5 9,11.5 Z" fill="#1a88d0"/><path d="M5,4.8 H10.5" stroke="#2a50c0" stroke-width="1.8"/><polygon points="2.5,4.8 6,1.8 6,7.8" fill="#2a50c0"/></svg>
<div style="position:absolute;left:370px;top:762px;width:1041px;height:20px;background:#c8c8c8"></div>
<svg style="position:absolute;left:372px;top:765px" width="14" height="14"><circle cx="6.5" cy="6.5" r="5.5" fill="none" stroke="#303030" stroke-width="1.2"/><path d="M6.5,3.5 V9.5 M3.5,6.5 H9.5" stroke="#303030" stroke-width="1.2"/></svg>
<div style="position:absolute;left:392px;top:765px;white-space:nowrap;font-size:11.7px;line-height:14px;font-weight:bold">Прибыль: 417.58&nbsp;&nbsp;Кредит: 0.00&nbsp;&nbsp;Депозит: 0.00&nbsp;&nbsp;Снятие: 0.00&nbsp;&nbsp;Баланс: 417.58</div>
<div style="position:absolute;left:1176px;top:765px;white-space:nowrap;font-size:12px;line-height:14px;font-weight:bold;width:67px;text-align:right">-79.92</div>
<div style="position:absolute;left:1246px;top:765px;white-space:nowrap;font-size:12px;line-height:14px;font-weight:bold;width:67px;text-align:right">0.00</div>
<div style="position:absolute;left:1316px;top:765px;white-space:nowrap;font-size:12px;line-height:14px;font-weight:bold;width:91px;text-align:right">497.50</div>
<div style="position:absolute;left:1411px;top:458px;width:17px;height:342px;background:#f0f0f0"></div>
<div style="position:absolute;left:1412px;top:701px;width:15px;height:80px;background:#cdcdcd"></div>
<svg style="position:absolute;left:1411px;top:458px" width="17" height="342"><path d="M4,15 L8.5,10.5 L13,15" stroke="#606060" stroke-width="1.5" fill="none"/><path d="M4,330 L8.5,334.5 L13,330" stroke="#606060" stroke-width="1.5" fill="none"/></svg>
<div style="position:absolute;left:370px;top:799px;width:135px;height:3px;border:1px solid #202020;border-bottom:none"></div>
<div style="position:absolute;left:570px;top:799px;width:841px;height:3px;border:1px solid #202020;border-bottom:none;border-right:none"></div>
</body></html>
